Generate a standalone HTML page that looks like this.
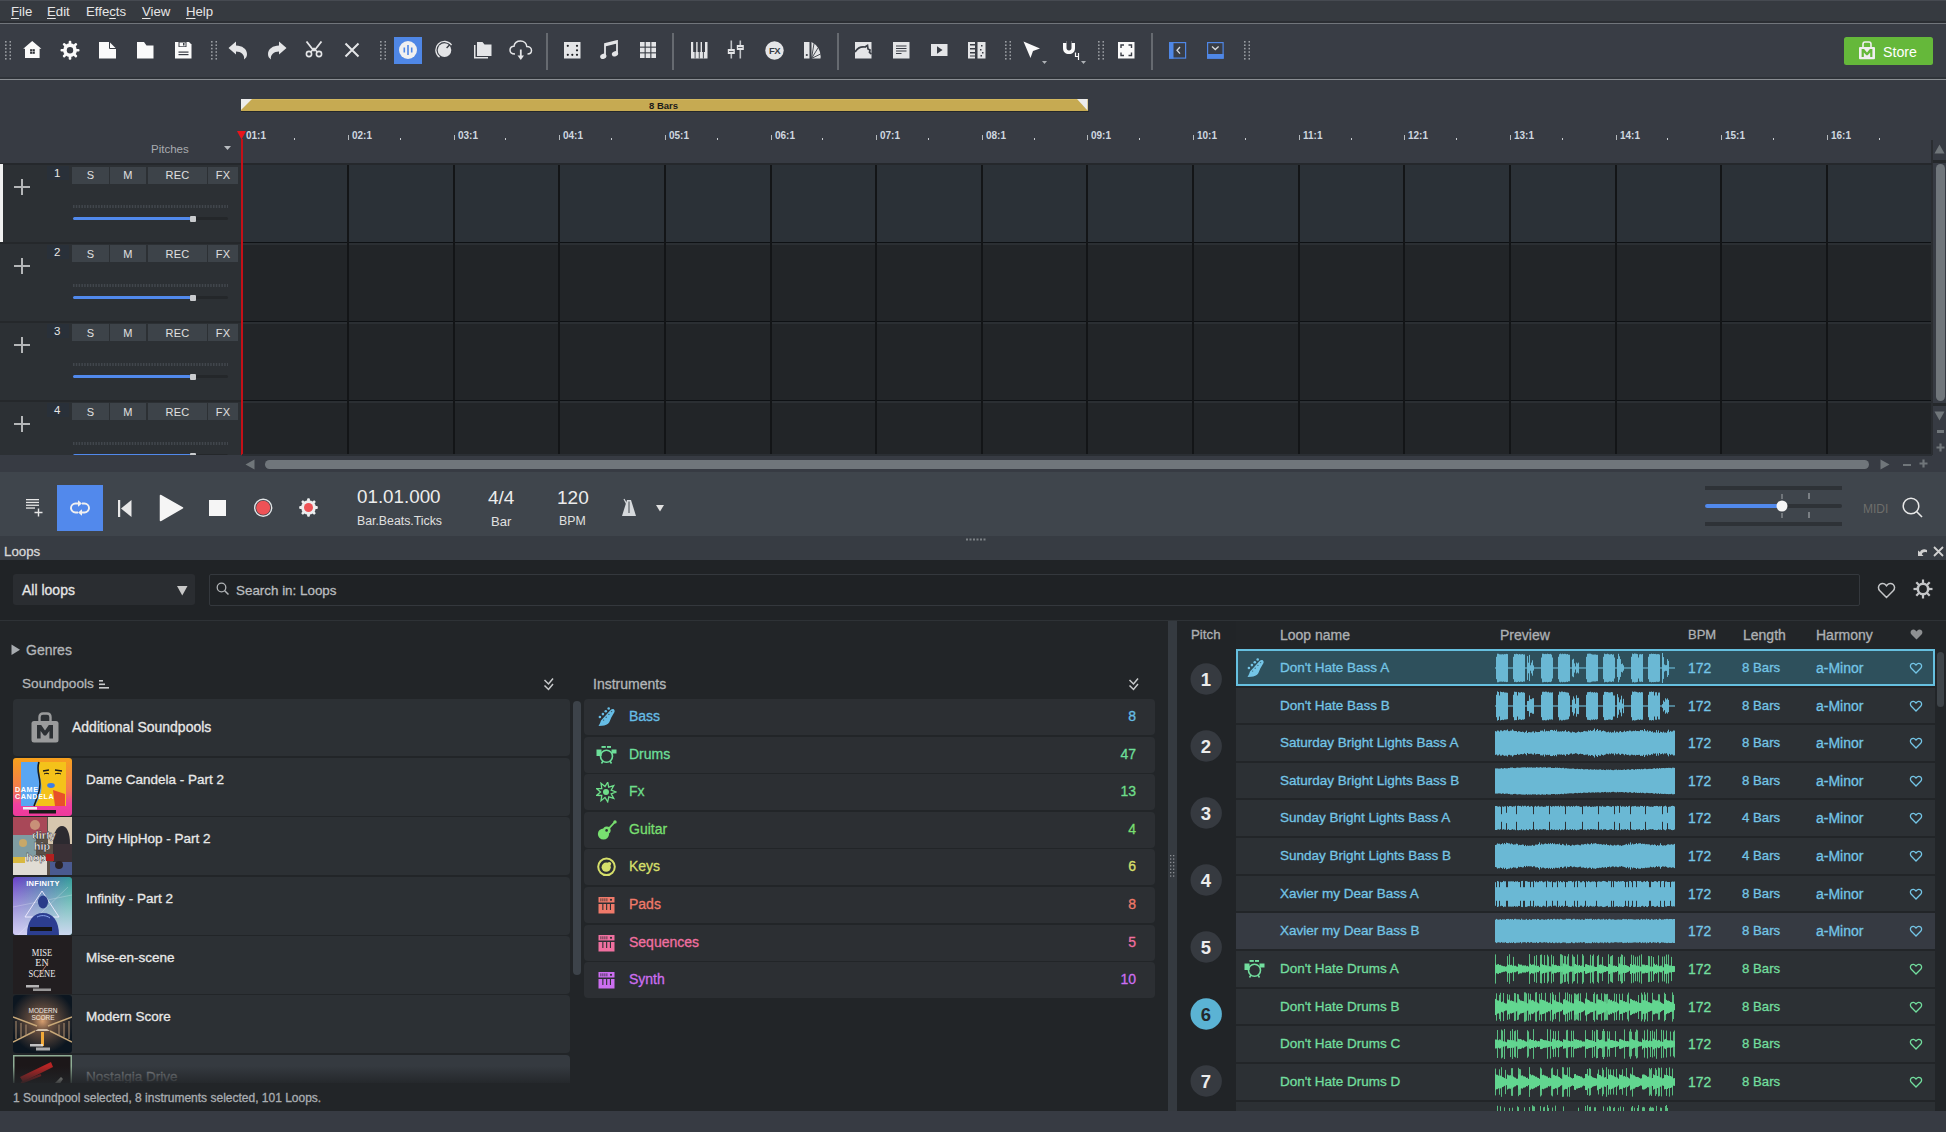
<!DOCTYPE html><html><head><meta charset="utf-8"><style>html,body{margin:0;padding:0;}body{width:1946px;height:1132px;overflow:hidden;position:relative;background:#363a40;font-family:"Liberation Sans",sans-serif;}div,svg{box-sizing:border-box;}</style></head><body>
<div style="position:absolute;left:0px;top:0px;width:1946px;height:21px;background:#363a40;"></div>
<div style="position:absolute;left:0px;top:0px;width:1946px;height:1px;background:#464a51;"></div>
<div style="position:absolute;left:0px;top:21px;width:1946px;height:2px;background:#2b2e33;"></div>
<div style="position:absolute;left:0px;top:23px;width:1946px;height:1px;background:#71757b;"></div>
<div style="position:absolute;left:11px;top:5px;font-size:13.2px;line-height:13.2px;color:#e6e6e6;font-weight:400;white-space:nowrap;"><span style="text-decoration:underline;text-underline-offset:2px">F</span>ile</div>
<div style="position:absolute;left:47px;top:5px;font-size:13.2px;line-height:13.2px;color:#e6e6e6;font-weight:400;white-space:nowrap;"><span style="text-decoration:underline;text-underline-offset:2px">E</span>dit</div>
<div style="position:absolute;left:86px;top:5px;font-size:13.2px;line-height:13.2px;color:#e6e6e6;font-weight:400;white-space:nowrap;">Effe<span style="text-decoration:underline;text-underline-offset:2px">c</span>ts</div>
<div style="position:absolute;left:142px;top:5px;font-size:13.2px;line-height:13.2px;color:#e6e6e6;font-weight:400;white-space:nowrap;"><span style="text-decoration:underline;text-underline-offset:2px">V</span>iew</div>
<div style="position:absolute;left:186px;top:5px;font-size:13.2px;line-height:13.2px;color:#e6e6e6;font-weight:400;white-space:nowrap;"><span style="text-decoration:underline;text-underline-offset:2px">H</span>elp</div>
<div style="position:absolute;left:0px;top:24px;width:1946px;height:53px;background:#393d45;"></div>
<div style="position:absolute;left:0px;top:77px;width:1946px;height:2px;background:#2f3339;"></div>
<div style="position:absolute;left:0px;top:79px;width:1946px;height:1px;background:#8a8e93;"></div>
<svg style="position:absolute;left:5px;top:41px;" width="6" height="20" viewBox="0 0 6 20"><rect x="0.0" y="0.0" width="1.6" height="1.6" fill="#9a9da2"/><rect x="4.5" y="0.0" width="1.6" height="1.6" fill="#9a9da2"/><rect x="0.0" y="3.4" width="1.6" height="1.6" fill="#9a9da2"/><rect x="4.5" y="3.4" width="1.6" height="1.6" fill="#9a9da2"/><rect x="0.0" y="6.8" width="1.6" height="1.6" fill="#9a9da2"/><rect x="4.5" y="6.8" width="1.6" height="1.6" fill="#9a9da2"/><rect x="0.0" y="10.2" width="1.6" height="1.6" fill="#9a9da2"/><rect x="4.5" y="10.2" width="1.6" height="1.6" fill="#9a9da2"/><rect x="0.0" y="13.6" width="1.6" height="1.6" fill="#9a9da2"/><rect x="4.5" y="13.6" width="1.6" height="1.6" fill="#9a9da2"/><rect x="0.0" y="17.0" width="1.6" height="1.6" fill="#9a9da2"/><rect x="4.5" y="17.0" width="1.6" height="1.6" fill="#9a9da2"/></svg>
<svg style="position:absolute;left:211px;top:41px;" width="6" height="20" viewBox="0 0 6 20"><rect x="0.0" y="0.0" width="1.6" height="1.6" fill="#9a9da2"/><rect x="4.5" y="0.0" width="1.6" height="1.6" fill="#9a9da2"/><rect x="0.0" y="3.4" width="1.6" height="1.6" fill="#9a9da2"/><rect x="4.5" y="3.4" width="1.6" height="1.6" fill="#9a9da2"/><rect x="0.0" y="6.8" width="1.6" height="1.6" fill="#9a9da2"/><rect x="4.5" y="6.8" width="1.6" height="1.6" fill="#9a9da2"/><rect x="0.0" y="10.2" width="1.6" height="1.6" fill="#9a9da2"/><rect x="4.5" y="10.2" width="1.6" height="1.6" fill="#9a9da2"/><rect x="0.0" y="13.6" width="1.6" height="1.6" fill="#9a9da2"/><rect x="4.5" y="13.6" width="1.6" height="1.6" fill="#9a9da2"/><rect x="0.0" y="17.0" width="1.6" height="1.6" fill="#9a9da2"/><rect x="4.5" y="17.0" width="1.6" height="1.6" fill="#9a9da2"/></svg>
<svg style="position:absolute;left:380px;top:41px;" width="6" height="20" viewBox="0 0 6 20"><rect x="0.0" y="0.0" width="1.6" height="1.6" fill="#9a9da2"/><rect x="4.5" y="0.0" width="1.6" height="1.6" fill="#9a9da2"/><rect x="0.0" y="3.4" width="1.6" height="1.6" fill="#9a9da2"/><rect x="4.5" y="3.4" width="1.6" height="1.6" fill="#9a9da2"/><rect x="0.0" y="6.8" width="1.6" height="1.6" fill="#9a9da2"/><rect x="4.5" y="6.8" width="1.6" height="1.6" fill="#9a9da2"/><rect x="0.0" y="10.2" width="1.6" height="1.6" fill="#9a9da2"/><rect x="4.5" y="10.2" width="1.6" height="1.6" fill="#9a9da2"/><rect x="0.0" y="13.6" width="1.6" height="1.6" fill="#9a9da2"/><rect x="4.5" y="13.6" width="1.6" height="1.6" fill="#9a9da2"/><rect x="0.0" y="17.0" width="1.6" height="1.6" fill="#9a9da2"/><rect x="4.5" y="17.0" width="1.6" height="1.6" fill="#9a9da2"/></svg>
<svg style="position:absolute;left:1005px;top:41px;" width="6" height="20" viewBox="0 0 6 20"><rect x="0.0" y="0.0" width="1.6" height="1.6" fill="#9a9da2"/><rect x="4.5" y="0.0" width="1.6" height="1.6" fill="#9a9da2"/><rect x="0.0" y="3.4" width="1.6" height="1.6" fill="#9a9da2"/><rect x="4.5" y="3.4" width="1.6" height="1.6" fill="#9a9da2"/><rect x="0.0" y="6.8" width="1.6" height="1.6" fill="#9a9da2"/><rect x="4.5" y="6.8" width="1.6" height="1.6" fill="#9a9da2"/><rect x="0.0" y="10.2" width="1.6" height="1.6" fill="#9a9da2"/><rect x="4.5" y="10.2" width="1.6" height="1.6" fill="#9a9da2"/><rect x="0.0" y="13.6" width="1.6" height="1.6" fill="#9a9da2"/><rect x="4.5" y="13.6" width="1.6" height="1.6" fill="#9a9da2"/><rect x="0.0" y="17.0" width="1.6" height="1.6" fill="#9a9da2"/><rect x="4.5" y="17.0" width="1.6" height="1.6" fill="#9a9da2"/></svg>
<svg style="position:absolute;left:1098px;top:41px;" width="6" height="20" viewBox="0 0 6 20"><rect x="0.0" y="0.0" width="1.6" height="1.6" fill="#9a9da2"/><rect x="4.5" y="0.0" width="1.6" height="1.6" fill="#9a9da2"/><rect x="0.0" y="3.4" width="1.6" height="1.6" fill="#9a9da2"/><rect x="4.5" y="3.4" width="1.6" height="1.6" fill="#9a9da2"/><rect x="0.0" y="6.8" width="1.6" height="1.6" fill="#9a9da2"/><rect x="4.5" y="6.8" width="1.6" height="1.6" fill="#9a9da2"/><rect x="0.0" y="10.2" width="1.6" height="1.6" fill="#9a9da2"/><rect x="4.5" y="10.2" width="1.6" height="1.6" fill="#9a9da2"/><rect x="0.0" y="13.6" width="1.6" height="1.6" fill="#9a9da2"/><rect x="4.5" y="13.6" width="1.6" height="1.6" fill="#9a9da2"/><rect x="0.0" y="17.0" width="1.6" height="1.6" fill="#9a9da2"/><rect x="4.5" y="17.0" width="1.6" height="1.6" fill="#9a9da2"/></svg>
<svg style="position:absolute;left:1244px;top:41px;" width="6" height="20" viewBox="0 0 6 20"><rect x="0.0" y="0.0" width="1.6" height="1.6" fill="#9a9da2"/><rect x="4.5" y="0.0" width="1.6" height="1.6" fill="#9a9da2"/><rect x="0.0" y="3.4" width="1.6" height="1.6" fill="#9a9da2"/><rect x="4.5" y="3.4" width="1.6" height="1.6" fill="#9a9da2"/><rect x="0.0" y="6.8" width="1.6" height="1.6" fill="#9a9da2"/><rect x="4.5" y="6.8" width="1.6" height="1.6" fill="#9a9da2"/><rect x="0.0" y="10.2" width="1.6" height="1.6" fill="#9a9da2"/><rect x="4.5" y="10.2" width="1.6" height="1.6" fill="#9a9da2"/><rect x="0.0" y="13.6" width="1.6" height="1.6" fill="#9a9da2"/><rect x="4.5" y="13.6" width="1.6" height="1.6" fill="#9a9da2"/><rect x="0.0" y="17.0" width="1.6" height="1.6" fill="#9a9da2"/><rect x="4.5" y="17.0" width="1.6" height="1.6" fill="#9a9da2"/></svg>
<div style="position:absolute;left:546px;top:33px;width:2px;height:37px;background:#666a70;"></div>
<div style="position:absolute;left:672px;top:33px;width:2px;height:37px;background:#666a70;"></div>
<div style="position:absolute;left:837px;top:33px;width:2px;height:37px;background:#666a70;"></div>
<div style="position:absolute;left:1151px;top:33px;width:2px;height:37px;background:#666a70;"></div>
<svg style="position:absolute;left:23px;top:40px;" width="19" height="19" viewBox="0 0 19 19"><path d="M9.2 1 L18.4 8.8 L16.6 8.8 L16.6 18.1 L2 18.1 L2 8.8 L0.2 8.8 Z" fill="#fafafa"/><rect x="7.1" y="9.2" width="4.7" height="4.6" fill="#2c2f35"/><path d="M9.45 9.2 v4.6 M7.1 11.5 h4.7" stroke="#fafafa" stroke-width="0.5"/></svg>
<svg style="position:absolute;left:60px;top:40px;" width="20" height="20" viewBox="0 0 20 20"><rect x="8.7" y="0.7" width="2.6" height="4.5" rx="1" fill="#fafafa" transform="rotate(0 10 10.2)"/><rect x="8.7" y="0.7" width="2.6" height="4.5" rx="1" fill="#fafafa" transform="rotate(45 10 10.2)"/><rect x="8.7" y="0.7" width="2.6" height="4.5" rx="1" fill="#fafafa" transform="rotate(90 10 10.2)"/><rect x="8.7" y="0.7" width="2.6" height="4.5" rx="1" fill="#fafafa" transform="rotate(135 10 10.2)"/><rect x="8.7" y="0.7" width="2.6" height="4.5" rx="1" fill="#fafafa" transform="rotate(180 10 10.2)"/><rect x="8.7" y="0.7" width="2.6" height="4.5" rx="1" fill="#fafafa" transform="rotate(225 10 10.2)"/><rect x="8.7" y="0.7" width="2.6" height="4.5" rx="1" fill="#fafafa" transform="rotate(270 10 10.2)"/><rect x="8.7" y="0.7" width="2.6" height="4.5" rx="1" fill="#fafafa" transform="rotate(315 10 10.2)"/><circle cx="10" cy="10.2" r="6.9" fill="#fafafa"/><circle cx="10" cy="10.2" r="3.2" fill="#393d45"/></svg>
<svg style="position:absolute;left:99px;top:42px;" width="17" height="17" viewBox="0 0 17 17"><path d="M0 0 H10.5 L17 6.5 V16.5 H0 Z" fill="#fafafa"/><path d="M10.5 0 V6.5 H17" fill="none" stroke="#393d45" stroke-width="1"/></svg>
<svg style="position:absolute;left:137px;top:42px;" width="17" height="17" viewBox="0 0 17 17"><path d="M0 0 H7 L9.5 3.5 H16.5 V16.5 H0 Z" fill="#fafafa"/></svg>
<svg style="position:absolute;left:175px;top:42px;" width="17" height="17" viewBox="0 0 17 17"><path d="M0 0 H14 L16.5 2.5 V16.5 H0 Z" fill="#fafafa"/><rect x="3.5" y="0" width="8" height="5" fill="#393d45"/><rect x="4.5" y="0.5" width="6" height="3.8" fill="#fafafa"/><rect x="8" y="1" width="1.5" height="2.5" fill="#393d45"/><rect x="3.5" y="9.5" width="10" height="1.2" fill="#393d45"/><rect x="3.5" y="12" width="10" height="1.2" fill="#393d45"/></svg>
<svg style="position:absolute;left:228px;top:41px;" width="20" height="19" viewBox="0 0 20 19"><path d="M0.5 7 L8 0.5 V4.5 C14 4.5 19 8 19 13 C19 15.5 18 17 16 18.5 C17 14 13 10.5 8 10.5 V13.5 Z" fill="#e4e5e7"/></svg>
<svg style="position:absolute;left:267px;top:41px;" width="20" height="19" viewBox="0 0 20 19"><path d="M19.5 7 L12 0.5 V4.5 C6 4.5 1 8 1 13 C1 15.5 2 17 4 18.5 C3 14 7 10.5 12 10.5 V13.5 Z" fill="#e4e5e7"/></svg>
<svg style="position:absolute;left:305px;top:41px;" width="18" height="17" viewBox="0 0 18 17"><path d="M1.5 0.5 L9 10 M16.5 0.5 L9 10" stroke="#e4e5e7" stroke-width="1.8" fill="none"/><circle cx="4" cy="13" r="2.6" fill="none" stroke="#e4e5e7" stroke-width="1.6"/><circle cx="14" cy="13" r="2.6" fill="none" stroke="#e4e5e7" stroke-width="1.6"/><path d="M5.8 11 L9 7.5 L12.2 11" stroke="#e4e5e7" stroke-width="1.6" fill="none"/></svg>
<svg style="position:absolute;left:344px;top:42px;" width="16" height="16" viewBox="0 0 16 16"><path d="M1.5 1.5 L14.5 14.5 M14.5 1.5 L1.5 14.5" stroke="#e4e5e7" stroke-width="2"/></svg>
<div style="position:absolute;left:394px;top:37px;width:28px;height:27px;background:#4f87e6;"></div>
<svg style="position:absolute;left:399px;top:41px;" width="18" height="18" viewBox="0 0 18 18"><circle cx="9" cy="9" r="9" fill="#f0f0f0"/><rect x="4.5" y="6.5" width="1.6" height="5" fill="#4f87e6"/><rect x="8.2" y="4" width="1.6" height="10" fill="#4f87e6"/><rect x="11.9" y="6.5" width="1.6" height="5" fill="#4f87e6"/></svg>
<svg style="position:absolute;left:435px;top:40px;" width="19" height="19" viewBox="0 0 19 19"><circle cx="9.5" cy="10.1" r="6.8" fill="#e4e5e7"/><path d="M4.57 17.14 A8.6 8.6 0 1 1 16.54 5.17" fill="none" stroke="#e4e5e7" stroke-width="1.3"/><path d="M11.6 8 L15 4.6" stroke="#393d45" stroke-width="1.4"/></svg>
<svg style="position:absolute;left:474px;top:41px;" width="19" height="18" viewBox="0 0 19 18"><path d="M0 4 V17.5 H14 V16 H1.5 V4 Z" fill="#e4e5e7"/><path d="M3 1 H8.5 L10.5 3.5 H17.5 V15 H3 Z" fill="#e4e5e7"/></svg>
<svg style="position:absolute;left:509px;top:40px;" width="24" height="21" viewBox="0 0 24 21"><path d="M6 14 C2.5 14 1 12 1 10 C1 7.5 3 6 5 6.2 C5.5 3 8 1 11.5 1 C15 1 17.5 3.5 17.8 6.5 C20.5 6.5 22.5 8.3 22.5 10.5 C22.5 12.5 21 14 18.5 14" fill="none" stroke="#e4e5e7" stroke-width="1.5"/><path d="M11.8 9.5 V18" stroke="#e4e5e7" stroke-width="1.8"/><path d="M8.5 15.5 L11.8 20 L15 15.5 Z" fill="#e4e5e7"/></svg>
<svg style="position:absolute;left:564px;top:42px;" width="17" height="17" viewBox="0 0 17 17"><rect x="0" y="0" width="16.5" height="16.5" fill="#e4e5e7"/><g fill="#1b1d20"><circle cx="3.8" cy="3.8" r="1.1"/><circle cx="13" cy="3.8" r="1.1"/><circle cx="13" cy="8.3" r="1.1"/><circle cx="3.8" cy="12.8" r="1.1"/><circle cx="8.3" cy="12.8" r="1.1"/><circle cx="13" cy="12.8" r="1.1"/></g></svg>
<svg style="position:absolute;left:600px;top:40px;" width="19" height="20" viewBox="0 0 19 20"><path d="M5 15.5 V4 L17 1 V13" stroke="#e4e5e7" stroke-width="1.8" fill="none"/><path d="M5 4 L17 1 V3.5 L5 6.5 Z" fill="#e4e5e7"/><ellipse cx="3.3" cy="16.3" rx="3.2" ry="2.5" fill="#e4e5e7" transform="rotate(-20 3.3 16.3)"/><ellipse cx="15" cy="13.8" rx="3.2" ry="2.5" fill="#e4e5e7" transform="rotate(-20 15 13.8)"/></svg>
<svg style="position:absolute;left:640px;top:42px;" width="17" height="17" viewBox="0 0 17 17"><rect x="0.0" y="0.0" width="4.6" height="4.6" fill="#e4e5e7"/><rect x="5.7" y="0.0" width="4.6" height="4.6" fill="#e4e5e7"/><rect x="11.4" y="0.0" width="4.6" height="4.6" fill="#e4e5e7"/><rect x="0.0" y="5.7" width="4.6" height="4.6" fill="#e4e5e7"/><rect x="5.7" y="5.7" width="4.6" height="4.6" fill="#e4e5e7"/><rect x="11.4" y="5.7" width="4.6" height="4.6" fill="#e4e5e7"/><rect x="0.0" y="11.4" width="4.6" height="4.6" fill="#e4e5e7"/><rect x="5.7" y="11.4" width="4.6" height="4.6" fill="#e4e5e7"/><rect x="11.4" y="11.4" width="4.6" height="4.6" fill="#e4e5e7"/></svg>
<svg style="position:absolute;left:691px;top:42px;" width="17" height="17" viewBox="0 0 17 17"><rect x="0" y="0" width="16.5" height="16.5" fill="#e4e5e7"/><g stroke="#393d45" stroke-width="0.9"><path d="M4.1 10 V16.5 M8.25 10 V16.5 M12.4 10 V16.5"/></g><g fill="#393d45"><rect x="2.2" y="0" width="3" height="10"/><rect x="6.6" y="0" width="3" height="10"/><rect x="11" y="0" width="3" height="10"/></g></svg>
<svg style="position:absolute;left:727px;top:40px;" width="19" height="20" viewBox="0 0 19 20"><rect x="3.5" y="0.5" width="1.6" height="18" fill="#bfc2c6"/><rect x="12.5" y="0.5" width="1.6" height="18" fill="#bfc2c6"/><rect x="0.8" y="9" width="7" height="5" fill="#e4e5e7"/><rect x="9.8" y="5" width="7" height="5" fill="#e4e5e7"/><path d="M2 11.5 h4.5 M11 7.5 h4.5" stroke="#393d45" stroke-width="0.8"/></svg>
<svg style="position:absolute;left:765px;top:41px;" width="19" height="19" viewBox="0 0 19 19"><circle cx="9.5" cy="9.5" r="9.2" fill="#e4e5e7"/><text x="9.6" y="13.2" font-family="Liberation Sans" font-weight="700" font-size="9.5" text-anchor="middle" fill="#393d45" letter-spacing="-0.6">FX</text></svg>
<svg style="position:absolute;left:804px;top:42px;" width="17" height="17" viewBox="0 0 17 17"><rect x="0" y="0" width="5.5" height="16.5" fill="#e4e5e7"/><circle cx="2.8" cy="13" r="1.1" fill="#393d45"/><path d="M7.5 0 A16 16 0 0 1 16.5 16.5 H7.5 Z" fill="#e4e5e7"/><path d="M7.5 16.5 L10 1.5 M7.5 16.5 L14 6 M7.5 16.5 L16.5 12" stroke="#393d45" stroke-width="0.9"/></svg>
<svg style="position:absolute;left:855px;top:42px;" width="17" height="17" viewBox="0 0 17 17"><rect x="0" y="0" width="16.5" height="16.5" fill="#e4e5e7"/><path d="M0 10 C3 5 7 4.5 10 5 L12.5 3.5 L13 7 L15 8 L14.5 10.5 L16.5 12" fill="none" stroke="#393d45" stroke-width="1.7"/></svg>
<svg style="position:absolute;left:893px;top:42px;" width="17" height="17" viewBox="0 0 17 17"><rect x="0" y="0" width="16.5" height="16.5" fill="#e4e5e7"/><g fill="#393d45"><rect x="3" y="3.5" width="10.5" height="1"/><rect x="3" y="6" width="10.5" height="1"/><rect x="3" y="8.5" width="10.5" height="1"/><rect x="3" y="11" width="5.5" height="1"/></g></svg>
<svg style="position:absolute;left:931px;top:44px;" width="17" height="13" viewBox="0 0 17 13"><rect x="0" y="0" width="16.5" height="12" fill="#e4e5e7"/><path d="M6 2.3 L11.5 6 L6 9.7 Z" fill="#393d45"/></svg>
<svg style="position:absolute;left:968px;top:42px;" width="18" height="17" viewBox="0 0 18 17"><rect x="0" y="0" width="7" height="16.5" fill="#e4e5e7"/><rect x="9.5" y="0" width="8" height="16.5" fill="#e4e5e7"/><g fill="#393d45"><rect x="2" y="2" width="5" height="1.5"/><rect x="2" y="6" width="5" height="1.5"/><rect x="2" y="10" width="5" height="1.5"/><rect x="2" y="13.5" width="5" height="1"/><rect x="13" y="3" width="1.5" height="1.5"/><rect x="12" y="7" width="1.5" height="1.5"/><rect x="14" y="10" width="1.5" height="1.5"/><rect x="12.5" y="13" width="1.5" height="1.5"/></g></svg>
<svg style="position:absolute;left:1022px;top:40px;" width="28" height="26" viewBox="0 0 28 26"><path d="M1.5 1.5 L18 8.5 L11 11 L8.5 18 Z" fill="#fafafa"/><path d="M20 21 L25 21 L22.5 24 Z" fill="#aeb2b6"/></svg>
<svg style="position:absolute;left:1061px;top:40px;" width="28" height="26" viewBox="0 0 28 26"><path d="M2 1 V8 C2 12 4.5 14 8 14 C11.5 14 14 12 14 8 V1 H10.5 V8 C10.5 9.5 9.5 10.5 8 10.5 C6.5 10.5 5.5 9.5 5.5 8 V1 Z" fill="#fafafa"/><rect x="2" y="1" width="3.5" height="2" fill="#393d45"/><rect x="10.5" y="1" width="3.5" height="2" fill="#393d45"/><path d="M14.5 12.5 V16.5 H18 M17.5 13 V20" stroke="#fafafa" stroke-width="1.2" fill="none"/><path d="M20 21 L25 21 L22.5 24 Z" fill="#aeb2b6"/></svg>
<svg style="position:absolute;left:1118px;top:42px;" width="17" height="17" viewBox="0 0 17 17"><rect x="0" y="0" width="16.5" height="16.5" fill="#fafafa"/><path d="M3 6 V3 H6 M10.5 3 H13.5 V6 M13.5 10.5 V13.5 H10.5 M6 13.5 H3 V10.5" fill="none" stroke="#393d45" stroke-width="1.4"/></svg>
<svg style="position:absolute;left:1169px;top:42px;" width="18" height="17" viewBox="0 0 18 17"><rect x="0.6" y="0.6" width="16" height="15.5" fill="none" stroke="#4f87e6" stroke-width="1.2"/><rect x="0" y="0" width="4.5" height="16.7" fill="#4f87e6"/><path d="M11 5 L8 8.3 L11 11.6" fill="none" stroke="#d9dce0" stroke-width="1.3"/></svg>
<svg style="position:absolute;left:1207px;top:42px;" width="17" height="17" viewBox="0 0 17 17"><rect x="0.6" y="0.6" width="15.5" height="15.5" fill="none" stroke="#4f87e6" stroke-width="1.2"/><rect x="0" y="12" width="16.7" height="4.7" fill="#4f87e6"/><path d="M5 4.5 L8.3 7.5 L11.6 4.5" fill="none" stroke="#d9dce0" stroke-width="1.3"/></svg>
<div style="position:absolute;left:1844px;top:37px;width:89px;height:28px;background:#65b83a;border-radius:2.5px;"></div>
<svg style="position:absolute;left:1858px;top:41px;" width="18" height="19" viewBox="0 0 18 19"><path d="M5 6.5 V3.2 C5 1.8 5.8 1 7 1 H11 C12.2 1 13 1.8 13 3.2 V6.5" fill="none" stroke="#f0eef0" stroke-width="1.6"/><rect x="1" y="5.9" width="16" height="12.4" rx="1" fill="#f0eef0"/><path d="M3.6 16 V8 H6.1 L9 11.6 L11.9 8 H14.4 V16 H12.2 V11.5 L9.7 14.3 H8.3 L5.8 11.5 V16 Z" fill="#65b83a"/></svg>
<div style="position:absolute;left:1883px;top:45px;font-size:14.2px;line-height:14.2px;color:#ffffff;font-weight:400;white-space:nowrap;">Store</div>
<div style="position:absolute;left:0px;top:80px;width:1946px;height:83px;background:#373b43;"></div>
<div style="position:absolute;left:241px;top:111px;width:848px;height:1px;background:#24272b;"></div>
<div style="position:absolute;left:241px;top:99px;width:847px;height:12px;background:#c6aa52;"></div>
<div style="position:absolute;left:241px;top:99px;width:847px;height:1px;background:#d2b75e;"></div>
<svg style="position:absolute;left:241px;top:99px;" width="12" height="12" viewBox="0 0 12 12"><path d="M0 0 H11 L0 11 Z" fill="#ececec"/></svg>
<svg style="position:absolute;left:1076px;top:99px;" width="12" height="12" viewBox="0 0 12 12"><path d="M1 0 H11.5 V11.5 Z" fill="#ececec"/></svg>
<div style="position:absolute;left:649px;top:101px;font-size:9.5px;line-height:9.5px;color:#1a1a1a;font-weight:700;white-space:nowrap;">8 Bars</div>
<div style="position:absolute;left:151px;top:144px;font-size:11.5px;line-height:11.5px;color:#a7abb0;font-weight:400;white-space:nowrap;">Pitches</div>
<svg style="position:absolute;left:224px;top:146px;" width="8" height="5" viewBox="0 0 8 5"><path d="M0 0 H7 L3.5 4 Z" fill="#b8bcc0"/></svg>
<div style="position:absolute;left:246px;top:131px;font-size:10px;line-height:10px;color:#cfd8e0;font-weight:700;white-space:nowrap;">01:1</div>
<div style="position:absolute;left:294px;top:138px;width:1px;height:2px;background:#c8ccd0;"></div>
<div style="position:absolute;left:352px;top:131px;font-size:10px;line-height:10px;color:#cfd8e0;font-weight:700;white-space:nowrap;">02:1</div>
<div style="position:absolute;left:348px;top:135px;width:1px;height:5px;background:#b4b8bc;"></div>
<div style="position:absolute;left:400px;top:138px;width:1px;height:2px;background:#c8ccd0;"></div>
<div style="position:absolute;left:458px;top:131px;font-size:10px;line-height:10px;color:#cfd8e0;font-weight:700;white-space:nowrap;">03:1</div>
<div style="position:absolute;left:454px;top:135px;width:1px;height:5px;background:#b4b8bc;"></div>
<div style="position:absolute;left:505px;top:138px;width:1px;height:2px;background:#c8ccd0;"></div>
<div style="position:absolute;left:563px;top:131px;font-size:10px;line-height:10px;color:#cfd8e0;font-weight:700;white-space:nowrap;">04:1</div>
<div style="position:absolute;left:559px;top:135px;width:1px;height:5px;background:#b4b8bc;"></div>
<div style="position:absolute;left:611px;top:138px;width:1px;height:2px;background:#c8ccd0;"></div>
<div style="position:absolute;left:669px;top:131px;font-size:10px;line-height:10px;color:#cfd8e0;font-weight:700;white-space:nowrap;">05:1</div>
<div style="position:absolute;left:665px;top:135px;width:1px;height:5px;background:#b4b8bc;"></div>
<div style="position:absolute;left:717px;top:138px;width:1px;height:2px;background:#c8ccd0;"></div>
<div style="position:absolute;left:775px;top:131px;font-size:10px;line-height:10px;color:#cfd8e0;font-weight:700;white-space:nowrap;">06:1</div>
<div style="position:absolute;left:771px;top:135px;width:1px;height:5px;background:#b4b8bc;"></div>
<div style="position:absolute;left:822px;top:138px;width:1px;height:2px;background:#c8ccd0;"></div>
<div style="position:absolute;left:880px;top:131px;font-size:10px;line-height:10px;color:#cfd8e0;font-weight:700;white-space:nowrap;">07:1</div>
<div style="position:absolute;left:876px;top:135px;width:1px;height:5px;background:#b4b8bc;"></div>
<div style="position:absolute;left:928px;top:138px;width:1px;height:2px;background:#c8ccd0;"></div>
<div style="position:absolute;left:986px;top:131px;font-size:10px;line-height:10px;color:#cfd8e0;font-weight:700;white-space:nowrap;">08:1</div>
<div style="position:absolute;left:982px;top:135px;width:1px;height:5px;background:#b4b8bc;"></div>
<div style="position:absolute;left:1034px;top:138px;width:1px;height:2px;background:#c8ccd0;"></div>
<div style="position:absolute;left:1091px;top:131px;font-size:10px;line-height:10px;color:#cfd8e0;font-weight:700;white-space:nowrap;">09:1</div>
<div style="position:absolute;left:1087px;top:135px;width:1px;height:5px;background:#b4b8bc;"></div>
<div style="position:absolute;left:1139px;top:138px;width:1px;height:2px;background:#c8ccd0;"></div>
<div style="position:absolute;left:1197px;top:131px;font-size:10px;line-height:10px;color:#cfd8e0;font-weight:700;white-space:nowrap;">10:1</div>
<div style="position:absolute;left:1193px;top:135px;width:1px;height:5px;background:#b4b8bc;"></div>
<div style="position:absolute;left:1245px;top:138px;width:1px;height:2px;background:#c8ccd0;"></div>
<div style="position:absolute;left:1303px;top:131px;font-size:10px;line-height:10px;color:#cfd8e0;font-weight:700;white-space:nowrap;">11:1</div>
<div style="position:absolute;left:1299px;top:135px;width:1px;height:5px;background:#b4b8bc;"></div>
<div style="position:absolute;left:1351px;top:138px;width:1px;height:2px;background:#c8ccd0;"></div>
<div style="position:absolute;left:1408px;top:131px;font-size:10px;line-height:10px;color:#cfd8e0;font-weight:700;white-space:nowrap;">12:1</div>
<div style="position:absolute;left:1404px;top:135px;width:1px;height:5px;background:#b4b8bc;"></div>
<div style="position:absolute;left:1456px;top:138px;width:1px;height:2px;background:#c8ccd0;"></div>
<div style="position:absolute;left:1514px;top:131px;font-size:10px;line-height:10px;color:#cfd8e0;font-weight:700;white-space:nowrap;">13:1</div>
<div style="position:absolute;left:1510px;top:135px;width:1px;height:5px;background:#b4b8bc;"></div>
<div style="position:absolute;left:1562px;top:138px;width:1px;height:2px;background:#c8ccd0;"></div>
<div style="position:absolute;left:1620px;top:131px;font-size:10px;line-height:10px;color:#cfd8e0;font-weight:700;white-space:nowrap;">14:1</div>
<div style="position:absolute;left:1616px;top:135px;width:1px;height:5px;background:#b4b8bc;"></div>
<div style="position:absolute;left:1667px;top:138px;width:1px;height:2px;background:#c8ccd0;"></div>
<div style="position:absolute;left:1725px;top:131px;font-size:10px;line-height:10px;color:#cfd8e0;font-weight:700;white-space:nowrap;">15:1</div>
<div style="position:absolute;left:1721px;top:135px;width:1px;height:5px;background:#b4b8bc;"></div>
<div style="position:absolute;left:1773px;top:138px;width:1px;height:2px;background:#c8ccd0;"></div>
<div style="position:absolute;left:1831px;top:131px;font-size:10px;line-height:10px;color:#cfd8e0;font-weight:700;white-space:nowrap;">16:1</div>
<div style="position:absolute;left:1827px;top:135px;width:1px;height:5px;background:#b4b8bc;"></div>
<div style="position:absolute;left:1879px;top:138px;width:1px;height:2px;background:#c8ccd0;"></div>
<svg style="position:absolute;left:237px;top:131px;" width="10" height="9" viewBox="0 0 10 9"><path d="M0 0 H9 L4.5 8.5 Z" fill="#e8141c"/></svg>
<div style="position:absolute;left:242px;top:164px;width:1690px;height:291px;background:#222528;"></div>
<div style="position:absolute;left:242px;top:164px;width:1690px;height:78px;background:#2b3137;"></div>
<div style="position:absolute;left:0px;top:164px;width:241px;height:78px;background:#2c3034;"></div>
<div style="position:absolute;left:0px;top:243px;width:241px;height:78px;background:#2c3034;"></div>
<div style="position:absolute;left:0px;top:322px;width:241px;height:78px;background:#2c3034;"></div>
<div style="position:absolute;left:0px;top:401px;width:241px;height:54px;background:#2c3034;"></div>
<div style="position:absolute;left:0px;top:242px;width:241px;height:2px;background:#25282b;"></div>
<div style="position:absolute;left:242px;top:242px;width:1690px;height:1px;background:#0e1114;"></div>
<div style="position:absolute;left:242px;top:243px;width:1690px;height:2px;background:#2b2f33;"></div>
<div style="position:absolute;left:0px;top:321px;width:241px;height:2px;background:#25282b;"></div>
<div style="position:absolute;left:242px;top:321px;width:1690px;height:1px;background:#0e1114;"></div>
<div style="position:absolute;left:242px;top:322px;width:1690px;height:2px;background:#2b2f33;"></div>
<div style="position:absolute;left:0px;top:400px;width:241px;height:2px;background:#25282b;"></div>
<div style="position:absolute;left:242px;top:400px;width:1690px;height:1px;background:#0e1114;"></div>
<div style="position:absolute;left:242px;top:401px;width:1690px;height:2px;background:#2b2f33;"></div>
<div style="position:absolute;left:347px;top:164px;width:2px;height:291px;background:#131517;"></div>
<div style="position:absolute;left:453px;top:164px;width:2px;height:291px;background:#131517;"></div>
<div style="position:absolute;left:558px;top:164px;width:2px;height:291px;background:#131517;"></div>
<div style="position:absolute;left:664px;top:164px;width:2px;height:291px;background:#131517;"></div>
<div style="position:absolute;left:770px;top:164px;width:2px;height:291px;background:#131517;"></div>
<div style="position:absolute;left:875px;top:164px;width:2px;height:291px;background:#131517;"></div>
<div style="position:absolute;left:981px;top:164px;width:2px;height:291px;background:#131517;"></div>
<div style="position:absolute;left:1086px;top:164px;width:2px;height:291px;background:#131517;"></div>
<div style="position:absolute;left:1192px;top:164px;width:2px;height:291px;background:#131517;"></div>
<div style="position:absolute;left:1298px;top:164px;width:2px;height:291px;background:#131517;"></div>
<div style="position:absolute;left:1403px;top:164px;width:2px;height:291px;background:#131517;"></div>
<div style="position:absolute;left:1509px;top:164px;width:2px;height:291px;background:#131517;"></div>
<div style="position:absolute;left:1615px;top:164px;width:2px;height:291px;background:#131517;"></div>
<div style="position:absolute;left:1720px;top:164px;width:2px;height:291px;background:#131517;"></div>
<div style="position:absolute;left:1826px;top:164px;width:2px;height:291px;background:#131517;"></div>
<div style="position:absolute;left:1931px;top:140px;width:2px;height:315px;background:#2a2d31;"></div>
<div style="position:absolute;left:0px;top:163px;width:1932px;height:2px;background:#25282c;"></div>
<div style="position:absolute;left:0px;top:164px;width:3px;height:78px;background:#f0f0f0;"></div>
<svg style="position:absolute;left:13px;top:178px;" width="18" height="18" viewBox="0 0 18 18"><path d="M9 1 V17 M1 9 H17" stroke="#b4b6b8" stroke-width="2"/></svg>
<div style="position:absolute;left:47px;top:166px;width:22px;height:14px;background:#293039;"></div>
<div style="position:absolute;left:54px;top:168px;font-size:11.5px;line-height:11.5px;color:#e8e8e8;font-weight:400;white-space:nowrap;">1</div>
<div style="position:absolute;left:72px;top:166.5px;width:37px;height:17px;background:#3d4349;"></div>
<div style="position:absolute;left:72px;top:169px;width:37px;text-align:center;font-size:11px;line-height:13px;color:#e0e0e0;letter-spacing:0.2px">S</div>
<div style="position:absolute;left:110px;top:166.5px;width:36px;height:17px;background:#3d4349;"></div>
<div style="position:absolute;left:110px;top:169px;width:36px;text-align:center;font-size:11px;line-height:13px;color:#e0e0e0;letter-spacing:0.2px">M</div>
<div style="position:absolute;left:148px;top:166.5px;width:59px;height:17px;background:#3d4349;"></div>
<div style="position:absolute;left:148px;top:169px;width:59px;text-align:center;font-size:11px;line-height:13px;color:#e0e0e0;letter-spacing:0.2px">REC</div>
<div style="position:absolute;left:208px;top:166.5px;width:30px;height:17px;background:#3d4349;"></div>
<div style="position:absolute;left:208px;top:169px;width:30px;text-align:center;font-size:11px;line-height:13px;color:#e0e0e0;letter-spacing:0.2px">FX</div>
<svg style="position:absolute;left:73px;top:205px;" width="155" height="3" viewBox="0 0 155 3"><line x1="0" y1="1.5" x2="155" y2="1.5" stroke="#41464c" stroke-width="3" stroke-dasharray="1.5 1.3"/></svg>
<div style="position:absolute;left:73px;top:217px;width:155px;height:3px;background:#24272a;border-radius:1.5px;"></div>
<div style="position:absolute;left:73px;top:217px;width:118px;height:3px;background:#5189ec;border-radius:1.5px;"></div>
<div style="position:absolute;left:190px;top:215.5px;width:6px;height:6px;background:#c9cbce;border-radius:1px;"></div>
<svg style="position:absolute;left:13px;top:257px;" width="18" height="18" viewBox="0 0 18 18"><path d="M9 1 V17 M1 9 H17" stroke="#b4b6b8" stroke-width="2"/></svg>
<div style="position:absolute;left:47px;top:245px;width:22px;height:14px;background:#293039;"></div>
<div style="position:absolute;left:54px;top:247px;font-size:11.5px;line-height:11.5px;color:#e8e8e8;font-weight:400;white-space:nowrap;">2</div>
<div style="position:absolute;left:72px;top:245px;width:37px;height:17px;background:#3d4349;"></div>
<div style="position:absolute;left:72px;top:248px;width:37px;text-align:center;font-size:11px;line-height:13px;color:#e0e0e0;letter-spacing:0.2px">S</div>
<div style="position:absolute;left:110px;top:245px;width:36px;height:17px;background:#3d4349;"></div>
<div style="position:absolute;left:110px;top:248px;width:36px;text-align:center;font-size:11px;line-height:13px;color:#e0e0e0;letter-spacing:0.2px">M</div>
<div style="position:absolute;left:148px;top:245px;width:59px;height:17px;background:#3d4349;"></div>
<div style="position:absolute;left:148px;top:248px;width:59px;text-align:center;font-size:11px;line-height:13px;color:#e0e0e0;letter-spacing:0.2px">REC</div>
<div style="position:absolute;left:208px;top:245px;width:30px;height:17px;background:#3d4349;"></div>
<div style="position:absolute;left:208px;top:248px;width:30px;text-align:center;font-size:11px;line-height:13px;color:#e0e0e0;letter-spacing:0.2px">FX</div>
<svg style="position:absolute;left:73px;top:284px;" width="155" height="3" viewBox="0 0 155 3"><line x1="0" y1="1.5" x2="155" y2="1.5" stroke="#41464c" stroke-width="3" stroke-dasharray="1.5 1.3"/></svg>
<div style="position:absolute;left:73px;top:296px;width:155px;height:3px;background:#24272a;border-radius:1.5px;"></div>
<div style="position:absolute;left:73px;top:296px;width:118px;height:3px;background:#5189ec;border-radius:1.5px;"></div>
<div style="position:absolute;left:190px;top:294.5px;width:6px;height:6px;background:#c9cbce;border-radius:1px;"></div>
<svg style="position:absolute;left:13px;top:336px;" width="18" height="18" viewBox="0 0 18 18"><path d="M9 1 V17 M1 9 H17" stroke="#b4b6b8" stroke-width="2"/></svg>
<div style="position:absolute;left:47px;top:324px;width:22px;height:14px;background:#293039;"></div>
<div style="position:absolute;left:54px;top:326px;font-size:11.5px;line-height:11.5px;color:#e8e8e8;font-weight:400;white-space:nowrap;">3</div>
<div style="position:absolute;left:72px;top:324px;width:37px;height:17px;background:#3d4349;"></div>
<div style="position:absolute;left:72px;top:327px;width:37px;text-align:center;font-size:11px;line-height:13px;color:#e0e0e0;letter-spacing:0.2px">S</div>
<div style="position:absolute;left:110px;top:324px;width:36px;height:17px;background:#3d4349;"></div>
<div style="position:absolute;left:110px;top:327px;width:36px;text-align:center;font-size:11px;line-height:13px;color:#e0e0e0;letter-spacing:0.2px">M</div>
<div style="position:absolute;left:148px;top:324px;width:59px;height:17px;background:#3d4349;"></div>
<div style="position:absolute;left:148px;top:327px;width:59px;text-align:center;font-size:11px;line-height:13px;color:#e0e0e0;letter-spacing:0.2px">REC</div>
<div style="position:absolute;left:208px;top:324px;width:30px;height:17px;background:#3d4349;"></div>
<div style="position:absolute;left:208px;top:327px;width:30px;text-align:center;font-size:11px;line-height:13px;color:#e0e0e0;letter-spacing:0.2px">FX</div>
<svg style="position:absolute;left:73px;top:363px;" width="155" height="3" viewBox="0 0 155 3"><line x1="0" y1="1.5" x2="155" y2="1.5" stroke="#41464c" stroke-width="3" stroke-dasharray="1.5 1.3"/></svg>
<div style="position:absolute;left:73px;top:375px;width:155px;height:3px;background:#24272a;border-radius:1.5px;"></div>
<div style="position:absolute;left:73px;top:375px;width:118px;height:3px;background:#5189ec;border-radius:1.5px;"></div>
<div style="position:absolute;left:190px;top:373.5px;width:6px;height:6px;background:#c9cbce;border-radius:1px;"></div>
<svg style="position:absolute;left:13px;top:415px;" width="18" height="18" viewBox="0 0 18 18"><path d="M9 1 V17 M1 9 H17" stroke="#b4b6b8" stroke-width="2"/></svg>
<div style="position:absolute;left:47px;top:403px;width:22px;height:14px;background:#293039;"></div>
<div style="position:absolute;left:54px;top:405px;font-size:11.5px;line-height:11.5px;color:#e8e8e8;font-weight:400;white-space:nowrap;">4</div>
<div style="position:absolute;left:72px;top:403px;width:37px;height:17px;background:#3d4349;"></div>
<div style="position:absolute;left:72px;top:406px;width:37px;text-align:center;font-size:11px;line-height:13px;color:#e0e0e0;letter-spacing:0.2px">S</div>
<div style="position:absolute;left:110px;top:403px;width:36px;height:17px;background:#3d4349;"></div>
<div style="position:absolute;left:110px;top:406px;width:36px;text-align:center;font-size:11px;line-height:13px;color:#e0e0e0;letter-spacing:0.2px">M</div>
<div style="position:absolute;left:148px;top:403px;width:59px;height:17px;background:#3d4349;"></div>
<div style="position:absolute;left:148px;top:406px;width:59px;text-align:center;font-size:11px;line-height:13px;color:#e0e0e0;letter-spacing:0.2px">REC</div>
<div style="position:absolute;left:208px;top:403px;width:30px;height:17px;background:#3d4349;"></div>
<div style="position:absolute;left:208px;top:406px;width:30px;text-align:center;font-size:11px;line-height:13px;color:#e0e0e0;letter-spacing:0.2px">FX</div>
<svg style="position:absolute;left:73px;top:442px;" width="155" height="3" viewBox="0 0 155 3"><line x1="0" y1="1.5" x2="155" y2="1.5" stroke="#41464c" stroke-width="3" stroke-dasharray="1.5 1.3"/></svg>
<div style="position:absolute;left:73px;top:454px;width:155px;height:3px;background:#24272a;border-radius:1.5px;"></div>
<div style="position:absolute;left:73px;top:454px;width:118px;height:3px;background:#5189ec;border-radius:1.5px;"></div>
<div style="position:absolute;left:190px;top:452.5px;width:6px;height:6px;background:#c9cbce;border-radius:1px;"></div>
<div style="position:absolute;left:241px;top:139px;width:2px;height:316px;background:#c41017;"></div>
<div style="position:absolute;left:1933px;top:140px;width:13px;height:315px;background:#373b43;"></div>
<svg style="position:absolute;left:1934px;top:144px;" width="11" height="10" viewBox="0 0 11 10"><path d="M5.5 0.5 L10.5 9.5 H0.5 Z" fill="#70767a"/></svg>
<div style="position:absolute;left:1933px;top:160px;width:13px;height:3px;background:#25282b;"></div>
<div style="position:absolute;left:1936px;top:164px;width:9px;height:237px;background:#70767b;border-radius:4.5px;"></div>
<div style="position:absolute;left:1933px;top:403px;width:13px;height:3px;background:#25282b;"></div>
<svg style="position:absolute;left:1934px;top:411px;" width="11" height="10" viewBox="0 0 11 10"><path d="M0.5 0.5 H10.5 L5.5 9.5 Z" fill="#70767a"/></svg>
<div style="position:absolute;left:1937px;top:430px;width:7px;height:2.5px;background:#70767a;"></div>
<svg style="position:absolute;left:1936px;top:443px;" width="9" height="9" viewBox="0 0 9 9"><path d="M4.5 0.5 V8.5 M0.5 4.5 H8.5" stroke="#70767a" stroke-width="2.2"/></svg>
<div style="position:absolute;left:0px;top:455px;width:1946px;height:17px;background:#373b43;"></div>
<div style="position:absolute;left:242px;top:454px;width:1690px;height:2px;background:#2a2e33;"></div>
<svg style="position:absolute;left:245px;top:459px;" width="10" height="11" viewBox="0 0 10 11"><path d="M9.5 0.5 V10.5 L0.5 5.5 Z" fill="#70767a"/></svg>
<div style="position:absolute;left:265px;top:460px;width:1604px;height:9px;background:#70767b;border-radius:4.5px;"></div>
<svg style="position:absolute;left:1880px;top:459px;" width="10" height="11" viewBox="0 0 10 11"><path d="M0.5 0.5 V10.5 L9.5 5.5 Z" fill="#70767a"/></svg>
<div style="position:absolute;left:1903px;top:463.5px;width:8px;height:2.5px;background:#70767a;"></div>
<svg style="position:absolute;left:1919px;top:459px;" width="9" height="9" viewBox="0 0 9 9"><path d="M4.5 0.5 V8.5 M0.5 4.5 H8.5" stroke="#70767a" stroke-width="2.2"/></svg>
<div style="position:absolute;left:0px;top:472px;width:1946px;height:64px;background:#3f454c;"></div>
<svg style="position:absolute;left:26px;top:499px;" width="18" height="18" viewBox="0 0 18 18"><g fill="#e6e6e6"><rect x="0" y="0" width="13" height="1.3"/><rect x="0" y="2.8" width="13" height="1.3"/><rect x="0" y="5.6" width="13" height="1.3"/><rect x="0" y="8.4" width="9" height="1.3"/></g><path d="M12.5 9.5 V17.5 M8.5 13.5 H16.5" stroke="#e6e6e6" stroke-width="1.4"/></svg>
<div style="position:absolute;left:57px;top:485px;width:46px;height:46px;background:#5289ec;"></div>
<svg style="position:absolute;left:68px;top:500px;" width="24" height="16" viewBox="0 0 24 16"><path d="M11 3.5 H7.5 A4.5 4.5 0 0 0 7.5 12.5 H10" fill="none" stroke="#f0f0f0" stroke-width="1.9"/><path d="M10 0.2 L14 3.5 L10 6.8 Z" fill="#f0f0f0"/><path d="M13 12.5 H16.5 A4.5 4.5 0 0 0 16.5 3.5 H14" fill="none" stroke="#f0f0f0" stroke-width="1.9"/><path d="M14 9.2 L10 12.5 L14 15.8 Z" fill="#f0f0f0"/></svg>
<svg style="position:absolute;left:117px;top:499px;" width="16" height="19" viewBox="0 0 16 19"><rect x="1" y="1" width="2.2" height="17" fill="#e8e8e8"/><path d="M14.5 1 V18 L4 9.5 Z" fill="#e8e8e8"/></svg>
<svg style="position:absolute;left:159px;top:494px;" width="25" height="28" viewBox="0 0 25 28"><path d="M1.5 1.5 L23.5 13.8 L1.5 26.5 Z" fill="#f5f5f5" stroke="#f5f5f5" stroke-width="1.5" stroke-linejoin="round"/></svg>
<div style="position:absolute;left:209px;top:500px;width:17px;height:16px;background:#f5f5f5;"></div>
<svg style="position:absolute;left:253px;top:498px;" width="21" height="21" viewBox="0 0 21 21"><circle cx="10.2" cy="9.7" r="8.5" fill="none" stroke="#e2e5e7" stroke-width="1.4"/><circle cx="10.2" cy="9.7" r="7" fill="#ee5256"/></svg>
<svg style="position:absolute;left:298px;top:497px;" width="21" height="21" viewBox="0 0 21 21"><rect x="9.1" y="1.2" width="2.8" height="3.5" rx="1" fill="#eceeef" transform="rotate(0 10.5 10.5)"/><rect x="9.1" y="1.2" width="2.8" height="3.5" rx="1" fill="#eceeef" transform="rotate(45 10.5 10.5)"/><rect x="9.1" y="1.2" width="2.8" height="3.5" rx="1" fill="#eceeef" transform="rotate(90 10.5 10.5)"/><rect x="9.1" y="1.2" width="2.8" height="3.5" rx="1" fill="#eceeef" transform="rotate(135 10.5 10.5)"/><rect x="9.1" y="1.2" width="2.8" height="3.5" rx="1" fill="#eceeef" transform="rotate(180 10.5 10.5)"/><rect x="9.1" y="1.2" width="2.8" height="3.5" rx="1" fill="#eceeef" transform="rotate(225 10.5 10.5)"/><rect x="9.1" y="1.2" width="2.8" height="3.5" rx="1" fill="#eceeef" transform="rotate(270 10.5 10.5)"/><rect x="9.1" y="1.2" width="2.8" height="3.5" rx="1" fill="#eceeef" transform="rotate(315 10.5 10.5)"/><circle cx="10.5" cy="10.5" r="7.3" fill="#eceeef"/><circle cx="10.5" cy="10.5" r="4.5" fill="#ee5256"/></svg>
<div style="position:absolute;left:357px;top:488px;font-size:18.8px;line-height:18.8px;color:#ececec;font-weight:400;white-space:nowrap;">01.01.000</div>
<div style="position:absolute;left:357px;top:515px;font-size:12.3px;line-height:12.3px;color:#e0e0e0;font-weight:400;white-space:nowrap;">Bar.Beats.Ticks</div>
<div style="position:absolute;left:488px;top:488px;font-size:19px;line-height:19px;color:#ececec;font-weight:400;white-space:nowrap;">4/4</div>
<div style="position:absolute;left:491px;top:515px;font-size:13px;line-height:13px;color:#e0e0e0;font-weight:400;white-space:nowrap;">Bar</div>
<div style="position:absolute;left:557px;top:488px;font-size:19px;line-height:19px;color:#ececec;font-weight:400;white-space:nowrap;">120</div>
<div style="position:absolute;left:559px;top:515px;font-size:12.3px;line-height:12.3px;color:#e0e0e0;font-weight:400;white-space:nowrap;">BPM</div>
<svg style="position:absolute;left:621px;top:498px;" width="17" height="19" viewBox="0 0 17 19"><path d="M6 2 H10 L15 18 H1 Z" fill="#d6d9dc"/><path d="M3 1 L9.5 13" stroke="#d6d9dc" stroke-width="1.2"/><path d="M8 3.5 V15" stroke="#3e444b" stroke-width="1"/></svg>
<svg style="position:absolute;left:656px;top:505px;" width="9" height="7" viewBox="0 0 9 7"><path d="M0 0 H8 L4 6.5 Z" fill="#e0e0e0"/></svg>
<div style="position:absolute;left:1705px;top:486px;width:137px;height:4px;background:#2e3237;"></div>
<div style="position:absolute;left:1705px;top:522px;width:137px;height:4px;background:#2e3237;"></div>
<div style="position:absolute;left:1705px;top:504px;width:137px;height:4px;background:#2e3237;border-radius:2px;"></div>
<div style="position:absolute;left:1705px;top:504px;width:77px;height:4px;background:#5189ec;border-radius:2px;"></div>
<div style="position:absolute;left:1781px;top:494px;width:2px;height:5px;background:#70757a;"></div>
<div style="position:absolute;left:1781px;top:513px;width:2px;height:5px;background:#70757a;"></div>
<div style="position:absolute;left:1808px;top:493px;width:2px;height:6px;background:#7a7f84;"></div>
<div style="position:absolute;left:1808px;top:512px;width:2px;height:6px;background:#7a7f84;"></div>
<svg style="position:absolute;left:1776px;top:500px;" width="12" height="12" viewBox="0 0 12 12"><circle cx="6" cy="6" r="5.5" fill="#f5f5f5"/></svg>
<div style="position:absolute;left:1863px;top:503px;font-size:12px;line-height:12px;color:#6e6e6b;font-weight:400;white-space:nowrap;">MIDI</div>
<svg style="position:absolute;left:1902px;top:497px;" width="22" height="22" viewBox="0 0 22 22"><circle cx="9" cy="9" r="7.8" fill="none" stroke="#e8e8e8" stroke-width="1.5"/><path d="M14.5 14.5 L20 20" stroke="#e8e8e8" stroke-width="1.6"/></svg>
<div style="position:absolute;left:0px;top:536px;width:1946px;height:24px;background:#373c43;"></div>
<div style="position:absolute;left:4px;top:545px;font-size:13.3px;line-height:13.3px;color:#d8d8d8;font-weight:400;white-space:nowrap;-webkit-text-stroke:0.3px #d8d8d8;">Loops</div>
<svg style="position:absolute;left:966px;top:538px;" width="22" height="3" viewBox="0 0 22 3"><rect x="0.0" y="0.5" width="2" height="2" fill="#7d8186"/><rect x="3.5" y="0.5" width="2" height="2" fill="#7d8186"/><rect x="7.0" y="0.5" width="2" height="2" fill="#7d8186"/><rect x="10.5" y="0.5" width="2" height="2" fill="#7d8186"/><rect x="14.0" y="0.5" width="2" height="2" fill="#7d8186"/><rect x="17.5" y="0.5" width="2" height="2" fill="#7d8186"/></svg>
<svg style="position:absolute;left:1917px;top:547px;" width="11" height="10" viewBox="0 0 11 10"><path d="M10 3 C7 1.5 4 2.5 3 5 L1 3.5 V9 H6.5 L4.8 7.3 C5.5 5.5 7.5 4.5 10 5.5 Z" fill="#d0d0d0"/></svg>
<svg style="position:absolute;left:1933px;top:546px;" width="11" height="11" viewBox="0 0 11 11"><path d="M1 1 L10 10 M10 1 L1 10" stroke="#d0d0d0" stroke-width="1.8"/></svg>
<div style="position:absolute;left:0px;top:560px;width:1946px;height:60px;background:#202326;"></div>
<div style="position:absolute;left:13px;top:574px;width:182px;height:31px;background:#2a2d31;border-radius:3px;"></div>
<div style="position:absolute;left:22px;top:583px;font-size:14px;line-height:14px;color:#e6e6e6;font-weight:400;white-space:nowrap;-webkit-text-stroke:0.3px #e6e6e6;">All loops</div>
<svg style="position:absolute;left:177px;top:586px;" width="11" height="10" viewBox="0 0 11 10"><path d="M0 0 H10.5 L5.25 9.5 Z" fill="#c8c8c8"/></svg>
<div style="position:absolute;left:209px;top:574px;width:1651px;height:32px;background:#1f2225;border:1px solid #34383d;border-radius:2px;"></div>
<svg style="position:absolute;left:216px;top:582px;" width="14" height="14" viewBox="0 0 14 14"><circle cx="5.5" cy="5.5" r="4.3" fill="none" stroke="#b0b3b6" stroke-width="1.3"/><path d="M8.7 8.7 L12.5 12.5" stroke="#b0b3b6" stroke-width="1.5"/></svg>
<div style="position:absolute;left:236px;top:584px;font-size:13.4px;line-height:13.4px;color:#b9bcbf;font-weight:400;white-space:nowrap;-webkit-text-stroke:0.3px #b9bcbf;">Search in: Loops</div>
<svg style="position:absolute;left:1877px;top:582px;" width="19" height="17" viewBox="0 0 19 17"><path d="M9.5 15.5 L2.8 8.8 C1 7 1 4.2 2.8 2.5 C4.6 0.9 7.2 1.1 8.6 2.8 L9.5 3.9 L10.4 2.8 C11.8 1.1 14.4 0.9 16.2 2.5 C18 4.2 18 7 16.2 8.8 Z" fill="none" stroke="#c4c6c8" stroke-width="1.5"/></svg>
<svg style="position:absolute;left:1913px;top:579px;" width="20" height="20" viewBox="0 0 20 20"><rect x="8.9" y="0.5" width="2.2" height="4.5" fill="#c4c6c8" transform="rotate(0 10 10)"/><rect x="8.9" y="0.5" width="2.2" height="4.5" fill="#c4c6c8" transform="rotate(45 10 10)"/><rect x="8.9" y="0.5" width="2.2" height="4.5" fill="#c4c6c8" transform="rotate(90 10 10)"/><rect x="8.9" y="0.5" width="2.2" height="4.5" fill="#c4c6c8" transform="rotate(135 10 10)"/><rect x="8.9" y="0.5" width="2.2" height="4.5" fill="#c4c6c8" transform="rotate(180 10 10)"/><rect x="8.9" y="0.5" width="2.2" height="4.5" fill="#c4c6c8" transform="rotate(225 10 10)"/><rect x="8.9" y="0.5" width="2.2" height="4.5" fill="#c4c6c8" transform="rotate(270 10 10)"/><rect x="8.9" y="0.5" width="2.2" height="4.5" fill="#c4c6c8" transform="rotate(315 10 10)"/><circle cx="10" cy="10" r="5.2" fill="none" stroke="#c4c6c8" stroke-width="2.6"/></svg>
<div style="position:absolute;left:0px;top:620px;width:1946px;height:1px;background:#2e3236;"></div>
<div style="position:absolute;left:0px;top:621px;width:1168px;height:490px;background:#222528;"></div>
<svg style="position:absolute;left:11px;top:644px;" width="10" height="12" viewBox="0 0 10 12"><path d="M0.5 0.5 L9 5.8 L0.5 11 Z" fill="#a8acb0"/></svg>
<div style="position:absolute;left:26px;top:643px;font-size:14px;line-height:14px;color:#b3b6b9;font-weight:400;white-space:nowrap;-webkit-text-stroke:0.3px #b3b6b9;">Genres</div>
<div style="position:absolute;left:22px;top:677px;font-size:13.6px;line-height:13.6px;color:#b3b6b9;font-weight:400;white-space:nowrap;-webkit-text-stroke:0.3px #b3b6b9;">Soundpools</div>
<svg style="position:absolute;left:99px;top:679px;" width="12" height="12" viewBox="0 0 12 12"><g fill="#c8cacc"><rect x="0" y="1" width="4" height="1.6"/><rect x="0" y="4.5" width="6" height="1.6"/><rect x="0" y="8" width="10" height="1.6"/></g></svg>
<svg style="position:absolute;left:543px;top:678px;" width="12" height="14" viewBox="0 0 12 14"><path d="M1.5 2 L5.5 6 L10 0.5 M1.5 7.5 L5.5 11.5 L10 6" fill="none" stroke="#c8cacc" stroke-width="1.5"/></svg>
<div style="position:absolute;left:13px;top:699px;width:557px;height:57px;background:#2c3034;border-radius:4px;"></div>
<svg style="position:absolute;left:31px;top:712px;" width="28" height="31" viewBox="0 0 28 31"><path d="M8.5 10 V5 C8.5 2.8 10 1.5 12 1.5 H16 C18 1.5 19.5 2.8 19.5 5 V10" fill="none" stroke="#9a9b9c" stroke-width="2.4"/><rect x="0.5" y="9" width="27" height="21.5" rx="2.5" fill="#9a9b9c"/><path d="M6 26.5 V13 H10.2 L14 18.5 L17.8 13 H22 V26.5 H18.4 V19 L15 23.5 H13 L9.6 19 V26.5 Z" fill="#2c3034"/></svg>
<div style="position:absolute;left:72px;top:720px;font-size:14px;line-height:14px;color:#e8e8e8;font-weight:400;white-space:nowrap;-webkit-text-stroke:0.3px #e8e8e8;">Additional Soundpools</div>
<div style="position:absolute;left:13px;top:758px;width:557px;height:58px;background:#2c3034;border-radius:4px;"></div>
<svg style="position:absolute;left:13px;top:758px;" width="59" height="58" viewBox="0 0 59 58"><defs><linearGradient id="gdc" x1="0" y1="0" x2="0" y2="1"><stop offset="0" stop-color="#f7a11c"/><stop offset="0.55" stop-color="#f47a50"/><stop offset="0.8" stop-color="#f040a0"/><stop offset="1" stop-color="#ee3a9c"/></linearGradient></defs><rect width="59" height="58" rx="3" fill="url(#gdc)"/><rect x="8" y="4" width="45" height="44" fill="#5aa6f2"/><path d="M26 4 H53 V48 H22 C26 40 30 34 28 24 C27 16 24 10 26 4 Z" fill="#f4c21a"/><path d="M26 4 C23 12 27 18 27 26 C27 34 24 40 21 48" fill="none" stroke="#1a1a1a" stroke-width="1.6"/><path d="M40 32 L52 36 V48 H42 Z" fill="#e8502a"/><path d="M30 13 L36 12 M42 12 L49 13" stroke="#1a1a1a" stroke-width="1.3"/><path d="M31 16 C33 15 35 15 36 16 M42 16 C44 15 46 15 48 16" stroke="#1a1a1a" stroke-width="1"/><ellipse cx="38" cy="27.5" rx="3.8" ry="2.4" fill="#3a7ee8"/><text x="2" y="34" font-family="Liberation Sans" font-size="7.2" font-weight="700" fill="#ffffff" letter-spacing="0.6">DAME</text><text x="2" y="41" font-family="Liberation Sans" font-size="7.2" font-weight="700" fill="#ffffff" letter-spacing="0.6">CANDELA</text><rect x="10" y="49" width="14" height="2.5" fill="#f0f0f0"/><rect x="16" y="52" width="27" height="3.5" fill="#1a1a1a"/></svg>
<div style="position:absolute;left:86px;top:773px;font-size:13.5px;line-height:13.5px;color:#e8e8e8;font-weight:400;white-space:nowrap;-webkit-text-stroke:0.3px #e8e8e8;">Dame Candela - Part 2</div>
<div style="position:absolute;left:13px;top:817px;width:557px;height:58px;background:#2c3034;border-radius:4px;"></div>
<svg style="position:absolute;left:13px;top:817px;" width="59" height="58" viewBox="0 0 59 58"><rect width="59" height="58" fill="#5a5048"/><rect x="0" y="0" width="34" height="18" fill="#a84858"/><circle cx="22" cy="8" r="5" fill="#c89078"/><rect x="35" y="0" width="24" height="27" fill="#d6c6ae"/><path d="M40 27 C40 16 44 9 49 9 C54 9 57 16 57 27 Z" fill="#2c2a30"/><rect x="0" y="18" width="23" height="22" fill="#7f9ca2"/><circle cx="10" cy="26" r="4" fill="#c8a868"/><rect x="40" y="27" width="19" height="22" fill="#3a3036"/><rect x="0" y="40" width="34" height="18" fill="#e0dcd4"/><rect x="0" y="40" width="12" height="6" fill="#d8b840"/><rect x="37" y="45" width="22" height="13" fill="#4a5a90"/><circle cx="46" cy="48" r="4" fill="#2a2226"/><text x="31" y="22" text-anchor="middle" font-family="Liberation Sans" font-size="11" font-weight="700" fill="#ffffff" stroke="#222" stroke-width="0.4">dirty</text><text x="29" y="33" text-anchor="middle" font-family="Liberation Sans" font-size="11" font-weight="700" fill="#ffffff" stroke="#222" stroke-width="0.4">hip</text><text x="23" y="44" text-anchor="middle" font-family="Liberation Sans" font-size="11" font-weight="700" fill="#ffffff" stroke="#222" stroke-width="0.4">hop</text><rect x="33" y="37" width="8" height="7" fill="#b02020"/></svg>
<div style="position:absolute;left:86px;top:832px;font-size:13.5px;line-height:13.5px;color:#e8e8e8;font-weight:400;white-space:nowrap;-webkit-text-stroke:0.3px #e8e8e8;">Dirty HipHop - Part 2</div>
<div style="position:absolute;left:13px;top:877px;width:557px;height:58px;background:#2c3034;border-radius:4px;"></div>
<svg style="position:absolute;left:13px;top:877px;" width="59" height="58" viewBox="0 0 59 58"><defs><linearGradient id="ginf" x1="0" y1="0" x2="1" y2="0.3"><stop offset="0" stop-color="#6a3ec8"/><stop offset="1" stop-color="#2ea396"/></linearGradient><linearGradient id="ginf2" x1="0" y1="0" x2="0" y2="1"><stop offset="0" stop-color="#ffffff" stop-opacity="0"/><stop offset="1" stop-color="#e8e0ff" stop-opacity="0.85"/></linearGradient></defs><rect width="59" height="58" rx="3" fill="url(#ginf)"/><rect width="59" height="58" rx="3" fill="url(#ginf2)"/><text x="30" y="9" text-anchor="middle" font-family="Liberation Sans" font-size="7.5" font-weight="700" fill="#ffffff" letter-spacing="0.3">INFINITY</text><path d="M29 14 L46 40 H12 Z" fill="none" stroke="#f0ecff" stroke-width="0.9"/><path d="M0 30 L59 18 M5 58 L55 10" stroke="#ffffff" stroke-width="0.4" opacity="0.6"/><ellipse cx="30" cy="25" rx="5" ry="6.5" fill="#2a3c8a"/><path d="M14 58 C14 44 20 36 30 36 C40 36 46 44 46 58 Z" fill="#2c3e90"/><path d="M24 40 C28 38 33 38 37 41" stroke="#8aa8f0" stroke-width="1" fill="none"/><rect x="17" y="50" width="22" height="4" fill="#151515"/></svg>
<div style="position:absolute;left:86px;top:892px;font-size:13.5px;line-height:13.5px;color:#e8e8e8;font-weight:400;white-space:nowrap;-webkit-text-stroke:0.3px #e8e8e8;">Infinity - Part 2</div>
<div style="position:absolute;left:13px;top:936px;width:557px;height:58px;background:#2c3034;border-radius:4px;"></div>
<svg style="position:absolute;left:13px;top:936px;" width="59" height="58" viewBox="0 0 59 58"><rect width="59" height="58" fill="#221e20"/><text x="29" y="20" text-anchor="middle" font-family="Liberation Serif" font-size="10" fill="#ececec" transform="translate(29 0) scale(0.85 1) translate(-29 0)">MISE</text><text x="29" y="30" text-anchor="middle" font-family="Liberation Serif" font-size="10" fill="#ececec">EN</text><text x="29" y="41" text-anchor="middle" font-family="Liberation Serif" font-size="10" fill="#ececec" transform="translate(29 0) scale(0.85 1) translate(-29 0)">SCENE</text><path d="M24 42 L35 27" stroke="#c87a60" stroke-width="0.9"/><rect x="13" y="49" width="13" height="2.5" fill="#e8e8e8" opacity="0.75"/><rect x="20" y="52.5" width="18" height="2.5" fill="#e8e8e8" opacity="0.6"/></svg>
<div style="position:absolute;left:86px;top:951px;font-size:13.5px;line-height:13.5px;color:#e8e8e8;font-weight:400;white-space:nowrap;-webkit-text-stroke:0.3px #e8e8e8;">Mise-en-scene</div>
<div style="position:absolute;left:13px;top:995px;width:557px;height:58px;background:#2c3034;border-radius:4px;"></div>
<svg style="position:absolute;left:13px;top:995px;" width="59" height="58" viewBox="0 0 59 58"><defs><radialGradient id="gms" cx="0.5" cy="0.45" r="0.55"><stop offset="0" stop-color="#d8a070"/><stop offset="0.3" stop-color="#6a5040"/><stop offset="1" stop-color="#0c1620"/></radialGradient></defs><rect width="59" height="58" rx="3" fill="url(#gms)"/><text x="30" y="18" text-anchor="middle" font-family="Liberation Sans" font-size="6.5" fill="#f0e8e0">MODERN</text><text x="30" y="25" text-anchor="middle" font-family="Liberation Sans" font-size="6.5" fill="#f0e8e0">SCORE</text><path d="M0 22 L24 31 M59 22 L35 31 M0 47 L22 36 M59 47 L37 36" stroke="#c8a878" stroke-width="1.4"/><path d="M3 26 V44 M8 28 V42 M13 29.5 V40.5 M56 26 V44 M51 28 V42 M46 29.5 V40.5" stroke="#b09070" stroke-width="1"/><path d="M22 36 H37 L34 34 H25 Z" fill="#f0e0c8" opacity="0.8"/><rect x="28" y="37" width="3" height="14" fill="#f0a838"/><rect x="17" y="49" width="13" height="2.5" fill="#e8e8e8" opacity="0.8"/><rect x="23" y="52.5" width="14" height="3" fill="#e8e8e8" opacity="0.7"/></svg>
<div style="position:absolute;left:86px;top:1010px;font-size:13.5px;line-height:13.5px;color:#e8e8e8;font-weight:400;white-space:nowrap;-webkit-text-stroke:0.3px #e8e8e8;">Modern Score</div>
<div style="position:absolute;left:13px;top:1055px;width:557px;height:58px;background:#353a40;border-radius:4px;"></div>
<svg style="position:absolute;left:13px;top:1055px;" width="59" height="58" viewBox="0 0 59 58"><rect x="0.75" y="0.75" width="57.5" height="57" fill="#1c1719" stroke="#8fae96" stroke-width="1.5"/><path d="M7 22 L38 7 L40 12 L10 27 Z" fill="#b82424"/><path d="M8 28 L28 20" stroke="#a02020" stroke-width="2"/><path d="M33 58 C33 42 35 32 40 30 L48 22 L50 24 L44 33 C46 40 46 50 45 58 Z" fill="#cfcfc4"/></svg>
<div style="position:absolute;left:86px;top:1070px;font-size:13.5px;line-height:13.5px;color:#8a8e92;font-weight:400;white-space:nowrap;-webkit-text-stroke:0.3px #8a8e92;">Nostalgia Drive</div>
<div style="position:absolute;left:0px;top:1066px;width:572px;height:20px;background:linear-gradient(to bottom, rgba(34,37,40,0) 0%, rgba(34,37,40,1) 100%);"></div>
<div style="position:absolute;left:0px;top:1083px;width:572px;height:30px;background:#222528;"></div>
<div style="position:absolute;left:573px;top:701px;width:8px;height:274px;background:#3d434a;border-radius:4px;"></div>
<div style="position:absolute;left:13px;top:1092px;font-size:12px;line-height:12px;color:#a9adb1;font-weight:400;white-space:nowrap;-webkit-text-stroke:0.3px #a9adb1;">1 Soundpool selected, 8 instruments selected, 101 Loops.</div>
<div style="position:absolute;left:593px;top:677px;font-size:14px;line-height:14px;color:#b3b6b9;font-weight:400;white-space:nowrap;-webkit-text-stroke:0.3px #b3b6b9;">Instruments</div>
<svg style="position:absolute;left:1128px;top:678px;" width="12" height="14" viewBox="0 0 12 14"><path d="M1.5 2 L5.5 6 L10 0.5 M1.5 7.5 L5.5 11.5 L10 6" fill="none" stroke="#c8cacc" stroke-width="1.5"/></svg>
<div style="position:absolute;left:584px;top:699px;width:571px;height:36px;background:#2c2f33;border-radius:4px;"></div>
<div style="position:absolute;left:629px;top:709px;font-size:14px;line-height:14px;color:#66bde6;font-weight:400;white-space:nowrap;-webkit-text-stroke:0.3px #66bde6;">Bass</div>
<div style="position:absolute;left:1036px;top:709px;width:100px;text-align:right;font-size:14px;line-height:14px;color:#66bde6;-webkit-text-stroke:0.3px #66bde6;">8</div>
<svg style="position:absolute;left:597px;top:707px;" width="20" height="20" viewBox="0 0 20 20"><path d="M1.5 19 L3 16.2 L4 13.6 L13.6 3 C14.5 2 16 1.6 17 2.4 C17.9 3.2 17.8 4.6 17.2 5.6 L14.3 10.5 L12.3 15.2 C11 17.5 8 18.6 5 18.8 Z" fill="#66bde6"/><g fill="#66bde6"><circle cx="2.9" cy="10" r="1.3"/><circle cx="5.9" cy="7.1" r="1.3"/><circle cx="8.8" cy="4.3" r="1.3"/><circle cx="11.7" cy="1.5" r="1.3"/></g><g fill="#2c2f33" opacity="0.7"><circle cx="6.6" cy="13.1" r="0.7"/><circle cx="9.2" cy="10.3" r="0.7"/><circle cx="11.9" cy="7.4" r="0.7"/><circle cx="14.6" cy="4.6" r="0.7"/></g></svg>
<div style="position:absolute;left:584px;top:737px;width:571px;height:36px;background:#2c2f33;border-radius:4px;"></div>
<div style="position:absolute;left:629px;top:747px;font-size:14px;line-height:14px;color:#6ddf9a;font-weight:400;white-space:nowrap;-webkit-text-stroke:0.3px #6ddf9a;">Drums</div>
<div style="position:absolute;left:1036px;top:747px;width:100px;text-align:right;font-size:14px;line-height:14px;color:#6ddf9a;-webkit-text-stroke:0.3px #6ddf9a;">47</div>
<svg style="position:absolute;left:596px;top:745px;" width="22" height="20" viewBox="0 0 22 20"><rect x="5.5" y="1" width="4.3" height="1.9" fill="#6ddf9a"/><rect x="11" y="1" width="4" height="1.9" fill="#6ddf9a"/><rect x="0.5" y="4.5" width="5" height="6.5" fill="#6ddf9a"/><rect x="15.5" y="4.5" width="5" height="4" fill="#6ddf9a"/><circle cx="10.5" cy="11.3" r="6" fill="none" stroke="#6ddf9a" stroke-width="1.6"/><path d="M5.5 18.5 L7 16 M15.5 18.5 L14 16" stroke="#6ddf9a" stroke-width="1.5"/></svg>
<div style="position:absolute;left:584px;top:774px;width:571px;height:36px;background:#2c2f33;border-radius:4px;"></div>
<div style="position:absolute;left:629px;top:784px;font-size:14px;line-height:14px;color:#6ede8a;font-weight:400;white-space:nowrap;-webkit-text-stroke:0.3px #6ede8a;">Fx</div>
<div style="position:absolute;left:1036px;top:784px;width:100px;text-align:right;font-size:14px;line-height:14px;color:#6ede8a;-webkit-text-stroke:0.3px #6ede8a;">13</div>
<svg style="position:absolute;left:596px;top:782px;" width="21" height="21" viewBox="0 0 21 21"><polygon points="20.0,10.0 15.2,11.9 17.7,16.4 12.8,14.8 11.7,19.8 9.0,15.4 5.0,18.7 5.8,13.5 0.6,13.4 4.5,10.0 0.6,6.6 5.8,6.5 5.0,1.3 9.0,4.6 11.7,0.2 12.7,5.2 17.7,3.6 15.2,8.1" fill="none" stroke="#6ede8a" stroke-width="1.3"/><circle cx="10" cy="10" r="3" fill="#6ede8a"/></svg>
<div style="position:absolute;left:584px;top:812px;width:571px;height:36px;background:#2c2f33;border-radius:4px;"></div>
<div style="position:absolute;left:629px;top:822px;font-size:14px;line-height:14px;color:#78df70;font-weight:400;white-space:nowrap;-webkit-text-stroke:0.3px #78df70;">Guitar</div>
<div style="position:absolute;left:1036px;top:822px;width:100px;text-align:right;font-size:14px;line-height:14px;color:#78df70;-webkit-text-stroke:0.3px #78df70;">4</div>
<svg style="position:absolute;left:597px;top:820px;" width="20" height="20" viewBox="0 0 20 20"><circle cx="6.5" cy="14" r="5.6" fill="#78df70"/><circle cx="9.8" cy="10.3" r="3.8" fill="#78df70"/><path d="M10 10.5 L17.5 2.3" stroke="#78df70" stroke-width="1.8"/><circle cx="18" cy="1.9" r="1.7" fill="#78df70"/><circle cx="9.6" cy="10.4" r="1.3" fill="#2c2f33"/></svg>
<div style="position:absolute;left:584px;top:849px;width:571px;height:36px;background:#2c2f33;border-radius:4px;"></div>
<div style="position:absolute;left:629px;top:859px;font-size:14px;line-height:14px;color:#d6df6a;font-weight:400;white-space:nowrap;-webkit-text-stroke:0.3px #d6df6a;">Keys</div>
<div style="position:absolute;left:1036px;top:859px;width:100px;text-align:right;font-size:14px;line-height:14px;color:#d6df6a;-webkit-text-stroke:0.3px #d6df6a;">6</div>
<svg style="position:absolute;left:597px;top:857px;" width="20" height="20" viewBox="0 0 20 20"><circle cx="9.5" cy="9.8" r="8.3" fill="none" stroke="#d6df6a" stroke-width="2"/><circle cx="9.2" cy="10.2" r="4.6" fill="#d6df6a"/><circle cx="12.3" cy="6.8" r="1.9" fill="#d6df6a"/></svg>
<div style="position:absolute;left:584px;top:887px;width:571px;height:36px;background:#2c2f33;border-radius:4px;"></div>
<div style="position:absolute;left:629px;top:897px;font-size:14px;line-height:14px;color:#f07a6a;font-weight:400;white-space:nowrap;-webkit-text-stroke:0.3px #f07a6a;">Pads</div>
<div style="position:absolute;left:1036px;top:897px;width:100px;text-align:right;font-size:14px;line-height:14px;color:#f07a6a;-webkit-text-stroke:0.3px #f07a6a;">8</div>
<svg style="position:absolute;left:597px;top:896px;" width="20" height="19" viewBox="0 0 20 19"><rect x="1.5" y="1" width="16" height="5.5" fill="#f07a6a"/><g fill="#2c2f33"><rect x="3.5" y="2.3" width="0.8" height="3"/><rect x="5.5" y="2.3" width="0.8" height="3"/><rect x="7.5" y="2.3" width="0.8" height="3"/><rect x="9.5" y="2.3" width="0.8" height="3"/><circle cx="14" cy="3.8" r="1.1"/></g><rect x="1.5" y="8" width="16" height="9.5" fill="#f07a6a"/><g fill="#2c2f33"><rect x="5.3" y="8" width="1.1" height="6"/><rect x="9.1" y="8" width="1.1" height="6"/><rect x="12.9" y="8" width="1.1" height="6"/></g></svg>
<div style="position:absolute;left:584px;top:925px;width:571px;height:36px;background:#2c2f33;border-radius:4px;"></div>
<div style="position:absolute;left:629px;top:935px;font-size:14px;line-height:14px;color:#f070a0;font-weight:400;white-space:nowrap;-webkit-text-stroke:0.3px #f070a0;">Sequences</div>
<div style="position:absolute;left:1036px;top:935px;width:100px;text-align:right;font-size:14px;line-height:14px;color:#f070a0;-webkit-text-stroke:0.3px #f070a0;">5</div>
<svg style="position:absolute;left:597px;top:934px;" width="20" height="19" viewBox="0 0 20 19"><rect x="1.5" y="1" width="16" height="5.5" fill="#f070a0"/><g fill="#2c2f33"><rect x="3.5" y="2.3" width="0.8" height="3"/><rect x="5.5" y="2.3" width="0.8" height="3"/><rect x="7.5" y="2.3" width="0.8" height="3"/><rect x="9.5" y="2.3" width="0.8" height="3"/><circle cx="14" cy="3.8" r="1.1"/></g><rect x="1.5" y="8" width="16" height="9.5" fill="#f070a0"/><g fill="#2c2f33"><rect x="5.3" y="8" width="1.1" height="6"/><rect x="9.1" y="8" width="1.1" height="6"/><rect x="12.9" y="8" width="1.1" height="6"/></g></svg>
<div style="position:absolute;left:584px;top:962px;width:571px;height:36px;background:#2c2f33;border-radius:4px;"></div>
<div style="position:absolute;left:629px;top:972px;font-size:14px;line-height:14px;color:#cc6ef0;font-weight:400;white-space:nowrap;-webkit-text-stroke:0.3px #cc6ef0;">Synth</div>
<div style="position:absolute;left:1036px;top:972px;width:100px;text-align:right;font-size:14px;line-height:14px;color:#cc6ef0;-webkit-text-stroke:0.3px #cc6ef0;">10</div>
<svg style="position:absolute;left:597px;top:971px;" width="20" height="19" viewBox="0 0 20 19"><rect x="1.5" y="1" width="16" height="5.5" fill="#cc6ef0"/><g fill="#2c2f33"><rect x="3.5" y="2.3" width="0.8" height="3"/><rect x="5.5" y="2.3" width="0.8" height="3"/><rect x="7.5" y="2.3" width="0.8" height="3"/><rect x="9.5" y="2.3" width="0.8" height="3"/><circle cx="14" cy="3.8" r="1.1"/></g><rect x="1.5" y="8" width="16" height="9.5" fill="#cc6ef0"/><g fill="#2c2f33"><rect x="5.3" y="8" width="1.1" height="6"/><rect x="9.1" y="8" width="1.1" height="6"/><rect x="12.9" y="8" width="1.1" height="6"/></g></svg>
<div style="position:absolute;left:1168px;top:621px;width:9px;height:490px;background:#353a40;"></div>
<svg style="position:absolute;left:1170px;top:855px;" width="6" height="22" viewBox="0 0 6 22"><rect x="0" y="0.0" width="1.3" height="1.3" fill="#8a8e93"/><rect x="3" y="0.0" width="1.3" height="1.3" fill="#8a8e93"/><rect x="0" y="3.4" width="1.3" height="1.3" fill="#8a8e93"/><rect x="3" y="3.4" width="1.3" height="1.3" fill="#8a8e93"/><rect x="0" y="6.8" width="1.3" height="1.3" fill="#8a8e93"/><rect x="3" y="6.8" width="1.3" height="1.3" fill="#8a8e93"/><rect x="0" y="10.2" width="1.3" height="1.3" fill="#8a8e93"/><rect x="3" y="10.2" width="1.3" height="1.3" fill="#8a8e93"/><rect x="0" y="13.6" width="1.3" height="1.3" fill="#8a8e93"/><rect x="3" y="13.6" width="1.3" height="1.3" fill="#8a8e93"/><rect x="0" y="17.0" width="1.3" height="1.3" fill="#8a8e93"/><rect x="3" y="17.0" width="1.3" height="1.3" fill="#8a8e93"/><rect x="0" y="20.4" width="1.3" height="1.3" fill="#8a8e93"/><rect x="3" y="20.4" width="1.3" height="1.3" fill="#8a8e93"/></svg>
<div style="position:absolute;left:1177px;top:621px;width:769px;height:490px;background:#222528;"></div>
<div style="position:absolute;left:1177px;top:621px;width:59px;height:490px;background:#212427;"></div>
<div style="position:absolute;left:1191px;top:628px;font-size:13.3px;line-height:13.3px;color:#aeb1b4;font-weight:400;white-space:nowrap;-webkit-text-stroke:0.3px #aeb1b4;">Pitch</div>
<div style="position:absolute;left:1280px;top:628px;font-size:14px;line-height:14px;color:#aeb1b4;font-weight:400;white-space:nowrap;-webkit-text-stroke:0.3px #aeb1b4;">Loop name</div>
<div style="position:absolute;left:1500px;top:628px;font-size:14px;line-height:14px;color:#aeb1b4;font-weight:400;white-space:nowrap;-webkit-text-stroke:0.3px #aeb1b4;">Preview</div>
<div style="position:absolute;left:1688px;top:628px;font-size:13px;line-height:13px;color:#aeb1b4;font-weight:400;white-space:nowrap;-webkit-text-stroke:0.3px #aeb1b4;">BPM</div>
<div style="position:absolute;left:1743px;top:628px;font-size:14px;line-height:14px;color:#aeb1b4;font-weight:400;white-space:nowrap;-webkit-text-stroke:0.3px #aeb1b4;">Length</div>
<div style="position:absolute;left:1816px;top:628px;font-size:14px;line-height:14px;color:#aeb1b4;font-weight:400;white-space:nowrap;-webkit-text-stroke:0.3px #aeb1b4;">Harmony</div>
<svg style="position:absolute;left:1910px;top:629px;" width="13" height="11" viewBox="0 0 13 11"><path d="M6.5 10.5 L1.5 5.5 C0.3 4.3 0.3 2.4 1.5 1.3 C2.7 0.2 4.5 0.4 5.6 1.5 L6.5 2.4 L7.4 1.5 C8.5 0.4 10.3 0.2 11.5 1.3 C12.7 2.4 12.7 4.3 11.5 5.5 Z" fill="#8e9092"/></svg>
<div style="position:absolute;left:1236px;top:649px;width:699px;height:37px;background:#2e505c;border:2px solid #66c0e0;"></div>
<div style="position:absolute;left:1280px;top:661px;font-size:13.5px;line-height:13.5px;color:#74c5e6;font-weight:400;white-space:nowrap;-webkit-text-stroke:0.3px #74c5e6;">Don&#39;t Hate Bass A</div>
<div style="position:absolute;left:1688px;top:661px;font-size:14px;line-height:14px;color:#74c5e6;font-weight:400;white-space:nowrap;-webkit-text-stroke:0.3px #74c5e6;">172</div>
<div style="position:absolute;left:1742px;top:661px;font-size:13.2px;line-height:13.2px;color:#74c5e6;font-weight:400;white-space:nowrap;-webkit-text-stroke:0.3px #74c5e6;">8 Bars</div>
<div style="position:absolute;left:1816px;top:661px;font-size:14px;line-height:14px;color:#74c5e6;font-weight:400;white-space:nowrap;-webkit-text-stroke:0.3px #74c5e6;">a-Minor</div>
<svg style="position:absolute;left:1909px;top:662px;" width="14" height="13" viewBox="0 0 14 13"><path d="M7 11 L2.3 6.3 C1.1 5.1 1.1 3.1 2.3 2 C3.5 0.9 5.4 1.1 6.3 2.3 L7 3.1 L7.7 2.3 C8.6 1.1 10.5 0.9 11.7 2 C12.9 3.1 12.9 5.1 11.7 6.3 Z" fill="none" stroke="#74c5e6" stroke-width="1.3"/></svg>
<svg style="position:absolute;left:1495px;top:653px;" width="180" height="30" viewBox="0 0 180 30"><path d="M0.5,14.4V15.6M1.5,3.8V26.2M2.5,0.7V29.3M3.5,0.8V29.2M4.5,1.3V28.7M5.5,1.4V28.6M6.5,1.4V28.6M7.5,1.2V28.8M8.5,1.5V28.5M9.5,1.1V28.9M10.5,1.2V28.8M11.5,0.9V29.1M12.5,1.1V28.9M13.5,14.4V15.6M14.5,14.4V15.6M15.5,14.4V15.6M16.5,14.4V15.6M17.5,14.4V15.6M18.5,3.8V26.2M19.5,1.0V29.0M20.5,1.2V28.8M21.5,0.8V29.2M22.5,1.0V29.0M23.5,1.5V28.5M24.5,1.0V29.0M25.5,1.4V28.6M26.5,1.3V28.7M27.5,1.0V29.0M28.5,1.6V28.4M29.5,1.4V28.6M30.5,14.4V15.6M31.5,14.4V15.6M32.5,3.1V26.9M33.5,9.7V20.3M34.5,1.9V28.1M35.5,12.3V17.7M36.5,9.6V20.4M37.5,7.3V22.7M38.5,12.4V17.6M39.5,14.4V15.6M40.5,14.4V15.6M41.5,14.4V15.6M42.5,14.4V15.6M43.5,14.4V15.6M44.5,14.4V15.6M45.5,14.4V15.6M46.5,4.5V25.5M47.5,0.7V29.3M48.5,0.8V29.2M49.5,1.1V28.9M50.5,0.9V29.1M51.5,1.1V28.9M52.5,0.7V29.3M53.5,1.0V29.0M54.5,1.1V28.9M55.5,0.9V29.1M56.5,1.6V28.4M57.5,4.5V25.5M58.5,14.4V15.6M59.5,14.4V15.6M60.5,14.4V15.6M61.5,14.4V15.6M62.5,14.4V15.6M63.5,3.8V26.2M64.5,1.2V28.8M65.5,0.6V29.4M66.5,1.2V28.8M67.5,0.7V29.3M68.5,1.1V28.9M69.5,0.8V29.2M70.5,0.9V29.1M71.5,1.3V28.7M72.5,1.0V29.0M73.5,1.7V28.3M74.5,1.7V28.3M75.5,14.4V15.6M76.5,14.4V15.6M77.5,6.6V23.4M78.5,5.8V24.2M79.5,10.4V19.6M80.5,13.5V16.5M81.5,9.6V20.4M82.5,10.5V19.5M83.5,9.6V20.4M84.5,14.4V15.6M85.5,14.4V15.6M86.5,14.4V15.6M87.5,14.4V15.6M88.5,14.4V15.6M89.5,14.4V15.6M90.5,14.4V15.6M91.5,3.8V26.2M92.5,0.8V29.2M93.5,0.7V29.3M94.5,0.6V29.4M95.5,0.7V29.3M96.5,1.2V28.8M97.5,1.5V28.5M98.5,1.6V28.4M99.5,1.5V28.5M100.5,1.5V28.5M101.5,1.8V28.2M102.5,1.8V28.2M103.5,14.4V15.6M104.5,14.4V15.6M105.5,14.4V15.6M106.5,14.4V15.6M107.5,14.4V15.6M108.5,3.8V26.2M109.5,0.7V29.3M110.5,1.1V28.9M111.5,1.1V28.9M112.5,0.7V29.3M113.5,1.1V28.9M114.5,1.5V28.5M115.5,1.3V28.7M116.5,1.0V29.0M117.5,1.7V28.3M118.5,1.3V28.7M119.5,4.5V25.5M120.5,14.4V15.6M121.5,14.4V15.6M122.5,6.0V24.0M123.5,0.8V29.2M124.5,3.3V26.7M125.5,6.1V23.9M126.5,11.1V18.9M127.5,10.5V19.5M128.5,12.3V17.7M129.5,14.4V15.6M130.5,14.4V15.6M131.5,14.4V15.6M132.5,14.4V15.6M133.5,14.4V15.6M134.5,14.4V15.6M135.5,14.4V15.6M136.5,3.8V26.2M137.5,0.6V29.4M138.5,1.1V28.9M139.5,0.5V29.5M140.5,0.7V29.3M141.5,0.8V29.2M142.5,1.1V28.9M143.5,4.5V25.5M144.5,1.4V28.6M145.5,1.1V28.9M146.5,1.4V28.6M147.5,1.0V29.0M148.5,14.4V15.6M149.5,14.4V15.6M150.5,14.4V15.6M151.5,14.4V15.6M152.5,14.4V15.6M153.5,3.8V26.2M154.5,1.1V28.9M155.5,1.1V28.9M156.5,0.6V29.4M157.5,1.0V29.0M158.5,0.8V29.2M159.5,1.0V29.0M160.5,0.9V29.1M161.5,1.3V28.7M162.5,1.1V28.9M163.5,1.1V28.9M164.5,1.5V28.5M165.5,14.4V15.6M166.5,14.4V15.6M167.5,0.0V30.0M168.5,4.1V25.9M169.5,11.5V18.5M170.5,12.2V17.8M171.5,12.1V17.9M172.5,6.1V23.9M173.5,7.9V22.1M174.5,14.4V15.6M175.5,14.4V15.6M176.5,14.4V15.6M177.5,14.4V15.6M178.5,14.4V15.6M179.5,14.4V15.6" stroke="#6ab8d4" stroke-width="1" fill="none"/><path d="" stroke="#6ab8d4" stroke-width="1" fill="none" opacity="0.85"/></svg>
<div style="position:absolute;left:1236px;top:688px;width:699px;height:35px;background:#2c3034;"></div>
<div style="position:absolute;left:1280px;top:699px;font-size:13.5px;line-height:13.5px;color:#74c5e6;font-weight:400;white-space:nowrap;-webkit-text-stroke:0.3px #74c5e6;">Don&#39;t Hate Bass B</div>
<div style="position:absolute;left:1688px;top:699px;font-size:14px;line-height:14px;color:#74c5e6;font-weight:400;white-space:nowrap;-webkit-text-stroke:0.3px #74c5e6;">172</div>
<div style="position:absolute;left:1742px;top:699px;font-size:13.2px;line-height:13.2px;color:#74c5e6;font-weight:400;white-space:nowrap;-webkit-text-stroke:0.3px #74c5e6;">8 Bars</div>
<div style="position:absolute;left:1816px;top:699px;font-size:14px;line-height:14px;color:#74c5e6;font-weight:400;white-space:nowrap;-webkit-text-stroke:0.3px #74c5e6;">a-Minor</div>
<svg style="position:absolute;left:1909px;top:700px;" width="14" height="13" viewBox="0 0 14 13"><path d="M7 11 L2.3 6.3 C1.1 5.1 1.1 3.1 2.3 2 C3.5 0.9 5.4 1.1 6.3 2.3 L7 3.1 L7.7 2.3 C8.6 1.1 10.5 0.9 11.7 2 C12.9 3.1 12.9 5.1 11.7 6.3 Z" fill="none" stroke="#74c5e6" stroke-width="1.3"/></svg>
<svg style="position:absolute;left:1495px;top:691px;" width="180" height="30" viewBox="0 0 180 30"><path d="M0.5,14.4V15.6M1.5,3.8V26.2M2.5,0.4V29.6M3.5,1.0V29.0M4.5,4.5V25.5M5.5,0.6V29.4M6.5,1.0V29.0M7.5,1.2V28.8M8.5,0.9V29.1M9.5,1.5V28.5M10.5,1.5V28.5M11.5,1.6V28.4M12.5,1.8V28.2M13.5,14.4V15.6M14.5,14.4V15.6M15.5,14.4V15.6M16.5,14.4V15.6M17.5,14.4V15.6M18.5,3.8V26.2M19.5,0.7V29.3M20.5,0.9V29.1M21.5,0.9V29.1M22.5,4.5V25.5M23.5,1.1V28.9M24.5,1.6V28.4M25.5,1.5V28.5M26.5,1.0V29.0M27.5,1.5V28.5M28.5,1.3V28.7M29.5,1.8V28.2M30.5,14.4V15.6M31.5,14.4V15.6M32.5,10.0V20.0M33.5,9.9V20.1M34.5,4.4V25.6M35.5,8.1V21.9M36.5,8.2V21.8M37.5,7.3V22.7M38.5,7.2V22.8M39.5,14.4V15.6M40.5,14.4V15.6M41.5,14.4V15.6M42.5,14.4V15.6M43.5,14.4V15.6M44.5,14.4V15.6M45.5,14.4V15.6M46.5,3.8V26.2M47.5,0.8V29.2M48.5,0.7V29.3M49.5,0.9V29.1M50.5,0.6V29.4M51.5,0.7V29.3M52.5,1.3V28.7M53.5,0.8V29.2M54.5,1.6V28.4M55.5,1.4V28.6M56.5,1.6V28.4M57.5,1.3V28.7M58.5,14.4V15.6M59.5,14.4V15.6M60.5,14.4V15.6M61.5,14.4V15.6M62.5,14.4V15.6M63.5,3.8V26.2M64.5,0.6V29.4M65.5,1.2V28.8M66.5,0.5V29.5M67.5,0.6V29.4M68.5,1.1V28.9M69.5,0.8V29.2M70.5,1.2V28.8M71.5,1.4V28.6M72.5,1.5V28.5M73.5,1.8V28.2M74.5,4.5V25.5M75.5,14.4V15.6M76.5,14.4V15.6M77.5,8.8V21.2M78.5,5.4V24.6M79.5,7.5V22.5M80.5,12.8V17.2M81.5,4.3V25.7M82.5,7.1V22.9M83.5,6.8V23.2M84.5,14.4V15.6M85.5,14.4V15.6M86.5,14.4V15.6M87.5,14.4V15.6M88.5,14.4V15.6M89.5,14.4V15.6M90.5,14.4V15.6M91.5,3.8V26.2M92.5,1.2V28.8M93.5,1.1V28.9M94.5,1.0V29.0M95.5,0.7V29.3M96.5,1.4V28.6M97.5,1.1V28.9M98.5,1.6V28.4M99.5,1.1V28.9M100.5,1.7V28.3M101.5,1.3V28.7M102.5,1.8V28.2M103.5,14.4V15.6M104.5,14.4V15.6M105.5,14.4V15.6M106.5,14.4V15.6M107.5,14.4V15.6M108.5,3.8V26.2M109.5,0.9V29.1M110.5,0.8V29.2M111.5,1.1V28.9M112.5,1.0V29.0M113.5,1.4V28.6M114.5,1.5V28.5M115.5,1.4V28.6M116.5,1.0V29.0M117.5,1.3V28.7M118.5,4.5V25.5M119.5,4.5V25.5M120.5,14.4V15.6M121.5,14.4V15.6M122.5,3.1V26.9M123.5,6.3V23.7M124.5,11.3V18.7M125.5,8.5V21.5M126.5,4.7V25.3M127.5,12.6V17.4M128.5,7.8V22.2M129.5,14.4V15.6M130.5,14.4V15.6M131.5,14.4V15.6M132.5,14.4V15.6M133.5,14.4V15.6M134.5,14.4V15.6M135.5,14.4V15.6M136.5,3.8V26.2M137.5,0.5V29.5M138.5,0.9V29.1M139.5,0.5V29.5M140.5,0.7V29.3M141.5,0.9V29.1M142.5,1.3V28.7M143.5,1.5V28.5M144.5,1.0V29.0M145.5,1.6V28.4M146.5,1.1V28.9M147.5,1.3V28.7M148.5,14.4V15.6M149.5,14.4V15.6M150.5,14.4V15.6M151.5,14.4V15.6M152.5,14.4V15.6M153.5,3.8V26.2M154.5,0.8V29.2M155.5,0.9V29.1M156.5,0.5V29.5M157.5,1.0V29.0M158.5,0.6V29.4M159.5,4.5V25.5M160.5,1.3V28.7M161.5,1.2V28.8M162.5,4.5V25.5M163.5,1.6V28.4M164.5,1.5V28.5M165.5,14.4V15.6M166.5,14.4V15.6M167.5,13.2V16.8M168.5,9.5V20.5M169.5,10.8V19.2M170.5,7.3V22.7M171.5,8.5V21.5M172.5,7.4V22.6M173.5,8.9V21.1M174.5,14.4V15.6M175.5,14.4V15.6M176.5,14.4V15.6M177.5,14.4V15.6M178.5,14.4V15.6M179.5,14.4V15.6" stroke="#6ab8d4" stroke-width="1" fill="none"/><path d="" stroke="#6ab8d4" stroke-width="1" fill="none" opacity="0.85"/></svg>
<div style="position:absolute;left:1236px;top:725px;width:699px;height:36px;background:#2c3034;"></div>
<div style="position:absolute;left:1280px;top:736px;font-size:13.5px;line-height:13.5px;color:#74c5e6;font-weight:400;white-space:nowrap;-webkit-text-stroke:0.3px #74c5e6;">Saturday Bright Lights Bass A</div>
<div style="position:absolute;left:1688px;top:736px;font-size:14px;line-height:14px;color:#74c5e6;font-weight:400;white-space:nowrap;-webkit-text-stroke:0.3px #74c5e6;">172</div>
<div style="position:absolute;left:1742px;top:736px;font-size:13.2px;line-height:13.2px;color:#74c5e6;font-weight:400;white-space:nowrap;-webkit-text-stroke:0.3px #74c5e6;">8 Bars</div>
<div style="position:absolute;left:1816px;top:736px;font-size:14px;line-height:14px;color:#74c5e6;font-weight:400;white-space:nowrap;-webkit-text-stroke:0.3px #74c5e6;">a-Minor</div>
<svg style="position:absolute;left:1909px;top:737px;" width="14" height="13" viewBox="0 0 14 13"><path d="M7 11 L2.3 6.3 C1.1 5.1 1.1 3.1 2.3 2 C3.5 0.9 5.4 1.1 6.3 2.3 L7 3.1 L7.7 2.3 C8.6 1.1 10.5 0.9 11.7 2 C12.9 3.1 12.9 5.1 11.7 6.3 Z" fill="none" stroke="#74c5e6" stroke-width="1.3"/></svg>
<svg style="position:absolute;left:1495px;top:728px;" width="180" height="30" viewBox="0 0 180 30"><path d="M0.5,3.1V26.9M1.5,3.5V26.5M2.5,2.5V27.5M3.5,2.7V27.3M4.5,3.6V26.4M5.5,2.3V27.7M6.5,2.4V27.6M7.5,3.2V26.8M8.5,2.6V27.4M9.5,2.1V27.9M10.5,2.4V27.6M11.5,2.3V27.7M12.5,1.5V28.5M13.5,3.1V26.9M14.5,3.2V26.8M15.5,2.6V27.4M16.5,2.6V27.4M17.5,1.4V28.6M18.5,2.5V27.5M19.5,3.1V26.9M20.5,3.0V27.0M21.5,3.0V27.0M22.5,4.1V25.9M23.5,3.2V26.8M24.5,3.3V26.7M25.5,3.8V26.2M26.5,4.0V26.0M27.5,3.6V26.4M28.5,3.9V26.1M29.5,4.7V25.3M30.5,3.9V26.1M31.5,2.7V27.3M32.5,5.0V25.0M33.5,4.1V25.9M34.5,4.1V25.9M35.5,4.3V25.7M36.5,4.3V25.7M37.5,3.6V26.4M38.5,3.4V26.6M39.5,4.8V25.2M40.5,3.5V26.5M41.5,3.9V26.1M42.5,4.1V25.9M43.5,4.0V26.0M44.5,4.0V26.0M45.5,2.6V27.4M46.5,2.7V27.3M47.5,2.5V27.5M48.5,3.4V26.6M49.5,1.4V28.6M50.5,3.5V26.5M51.5,2.8V27.2M52.5,3.2V26.8M53.5,2.9V27.1M54.5,3.3V26.7M55.5,2.0V28.0M56.5,1.9V28.1M57.5,2.0V28.0M58.5,2.8V27.2M59.5,1.9V28.1M60.5,3.0V27.0M61.5,1.7V28.3M62.5,3.6V26.4M63.5,3.4V26.6M64.5,3.6V26.4M65.5,3.3V26.7M66.5,3.6V26.4M67.5,3.0V27.0M68.5,3.5V26.5M69.5,3.2V26.8M70.5,2.1V27.9M71.5,3.7V26.3M72.5,3.8V26.2M73.5,3.0V27.0M74.5,3.6V26.4M75.5,4.4V25.6M76.5,4.6V25.4M77.5,3.6V26.4M78.5,4.1V25.9M79.5,4.2V25.8M80.5,4.8V25.2M81.5,4.6V25.4M82.5,4.1V25.9M83.5,3.4V26.6M84.5,4.0V26.0M85.5,4.3V25.7M86.5,3.9V26.1M87.5,4.0V26.0M88.5,3.3V26.7M89.5,2.9V27.1M90.5,3.3V26.7M91.5,3.3V26.7M92.5,3.6V26.4M93.5,2.2V27.8M94.5,2.8V27.2M95.5,2.1V27.9M96.5,3.0V27.0M97.5,2.7V27.3M98.5,1.9V28.1M99.5,0.5V29.5M100.5,3.3V26.7M101.5,2.0V28.0M102.5,1.0V29.0M103.5,2.9V27.1M104.5,2.3V27.7M105.5,2.2V27.8M106.5,3.6V26.4M107.5,3.0V27.0M108.5,2.5V27.5M109.5,3.1V26.9M110.5,3.5V26.5M111.5,4.3V25.7M112.5,4.1V25.9M113.5,3.6V26.4M114.5,4.5V25.5M115.5,3.8V26.2M116.5,4.7V25.3M117.5,4.2V25.8M118.5,4.4V25.6M119.5,2.7V27.3M120.5,4.6V25.4M121.5,3.7V26.3M122.5,3.8V26.2M123.5,4.7V25.3M124.5,3.6V26.4M125.5,3.0V27.0M126.5,4.1V25.9M127.5,4.2V25.8M128.5,3.7V26.3M129.5,2.7V27.3M130.5,3.9V26.1M131.5,3.3V26.7M132.5,3.0V27.0M133.5,3.3V26.7M134.5,2.5V27.5M135.5,2.6V27.4M136.5,3.4V26.6M137.5,3.2V26.8M138.5,2.8V27.2M139.5,3.1V26.9M140.5,2.4V27.6M141.5,3.1V26.9M142.5,3.0V27.0M143.5,3.1V26.9M144.5,3.2V26.8M145.5,2.0V28.0M146.5,2.3V27.7M147.5,2.0V28.0M148.5,3.2V26.8M149.5,1.0V29.0M150.5,2.7V27.3M151.5,3.3V26.7M152.5,2.2V27.8M153.5,3.7V26.3M154.5,2.8V27.2M155.5,2.9V27.1M156.5,3.9V26.1M157.5,3.3V26.7M158.5,4.6V25.4M159.5,4.2V25.8M160.5,4.6V25.4M161.5,2.1V27.9M162.5,4.4V25.6M163.5,2.4V27.6M164.5,5.0V25.0M165.5,3.7V26.3M166.5,4.0V26.0M167.5,4.6V25.4M168.5,3.6V26.4M169.5,4.6V25.4M170.5,4.4V25.6M171.5,4.8V25.2M172.5,3.3V26.7M173.5,1.7V28.3M174.5,4.1V25.9M175.5,2.9V27.1M176.5,3.6V26.4M177.5,3.4V26.6M178.5,2.5V27.5M179.5,2.6V27.4" stroke="#6ab8d4" stroke-width="1" fill="none"/><path d="" stroke="#6ab8d4" stroke-width="1" fill="none" opacity="0.85"/></svg>
<div style="position:absolute;left:1236px;top:763px;width:699px;height:35px;background:#2c3034;"></div>
<div style="position:absolute;left:1280px;top:774px;font-size:13.5px;line-height:13.5px;color:#74c5e6;font-weight:400;white-space:nowrap;-webkit-text-stroke:0.3px #74c5e6;">Saturday Bright Lights Bass B</div>
<div style="position:absolute;left:1688px;top:774px;font-size:14px;line-height:14px;color:#74c5e6;font-weight:400;white-space:nowrap;-webkit-text-stroke:0.3px #74c5e6;">172</div>
<div style="position:absolute;left:1742px;top:774px;font-size:13.2px;line-height:13.2px;color:#74c5e6;font-weight:400;white-space:nowrap;-webkit-text-stroke:0.3px #74c5e6;">8 Bars</div>
<div style="position:absolute;left:1816px;top:774px;font-size:14px;line-height:14px;color:#74c5e6;font-weight:400;white-space:nowrap;-webkit-text-stroke:0.3px #74c5e6;">a-Minor</div>
<svg style="position:absolute;left:1909px;top:775px;" width="14" height="13" viewBox="0 0 14 13"><path d="M7 11 L2.3 6.3 C1.1 5.1 1.1 3.1 2.3 2 C3.5 0.9 5.4 1.1 6.3 2.3 L7 3.1 L7.7 2.3 C8.6 1.1 10.5 0.9 11.7 2 C12.9 3.1 12.9 5.1 11.7 6.3 Z" fill="none" stroke="#74c5e6" stroke-width="1.3"/></svg>
<svg style="position:absolute;left:1495px;top:766px;" width="180" height="30" viewBox="0 0 180 30"><path d="M0.5,2.4V27.6M1.5,2.4V27.6M2.5,2.4V27.6M3.5,2.6V27.4M4.5,2.6V27.4M5.5,2.5V27.5M6.5,2.1V27.9M7.5,2.6V27.4M8.5,2.5V27.5M9.5,2.0V28.0M10.5,2.3V27.7M11.5,2.4V27.6M12.5,2.4V27.6M13.5,2.0V28.0M14.5,2.1V27.9M15.5,1.6V28.4M16.5,1.6V28.4M17.5,1.5V28.5M18.5,2.0V28.0M19.5,2.1V27.9M20.5,2.1V27.9M21.5,1.7V28.3M22.5,1.5V28.5M23.5,1.7V28.3M24.5,1.8V28.2M25.5,1.7V28.3M26.5,1.5V28.5M27.5,1.4V28.6M28.5,1.4V28.6M29.5,1.3V28.7M30.5,1.4V28.6M31.5,1.8V28.2M32.5,1.2V28.8M33.5,1.6V28.4M34.5,1.4V28.6M35.5,1.5V28.5M36.5,1.3V28.7M37.5,1.7V28.3M38.5,1.6V28.4M39.5,1.6V28.4M40.5,1.7V28.3M41.5,1.1V28.9M42.5,1.4V28.6M43.5,1.6V28.4M44.5,1.5V28.5M45.5,1.1V28.9M46.5,1.5V28.5M47.5,1.7V28.3M48.5,1.3V28.7M49.5,1.4V28.6M50.5,1.2V28.8M51.5,1.9V28.1M52.5,1.6V28.4M53.5,1.4V28.6M54.5,1.4V28.6M55.5,1.3V28.7M56.5,2.0V28.0M57.5,1.9V28.1M58.5,2.0V28.0M59.5,2.0V28.0M60.5,1.5V28.5M61.5,1.8V28.2M62.5,1.6V28.4M63.5,2.0V28.0M64.5,1.7V28.3M65.5,2.0V28.0M66.5,2.2V27.8M67.5,1.9V28.1M68.5,1.8V28.2M69.5,2.5V27.5M70.5,2.2V27.8M71.5,2.2V27.8M72.5,2.5V27.5M73.5,2.5V27.5M74.5,2.7V27.3M75.5,2.7V27.3M76.5,2.7V27.3M77.5,2.5V27.5M78.5,2.5V27.5M79.5,2.9V27.1M80.5,3.1V26.9M81.5,2.9V27.1M82.5,2.7V27.3M83.5,3.1V26.9M84.5,3.0V27.0M85.5,3.2V26.8M86.5,2.8V27.2M87.5,3.0V27.0M88.5,3.4V26.6M89.5,3.4V26.6M90.5,3.2V26.8M91.5,3.2V26.8M92.5,3.1V26.9M93.5,3.6V26.4M94.5,3.6V26.4M95.5,3.2V26.8M96.5,3.5V26.5M97.5,3.6V26.4M98.5,3.6V26.4M99.5,3.2V26.8M100.5,3.7V26.3M101.5,3.5V26.5M102.5,3.7V26.3M103.5,3.7V26.3M104.5,3.4V26.6M105.5,3.3V26.7M106.5,3.8V26.2M107.5,3.9V26.1M108.5,3.6V26.4M109.5,4.0V26.0M110.5,4.1V25.9M111.5,3.5V26.5M112.5,3.8V26.2M113.5,3.6V26.4M114.5,3.9V26.1M115.5,3.5V26.5M116.5,3.9V26.1M117.5,4.1V25.9M118.5,4.2V25.8M119.5,3.8V26.2M120.5,3.7V26.3M121.5,3.5V26.5M122.5,4.1V25.9M123.5,3.7V26.3M124.5,3.9V26.1M125.5,3.8V26.2M126.5,4.0V26.0M127.5,3.9V26.1M128.5,3.7V26.3M129.5,3.4V26.6M130.5,4.0V26.0M131.5,3.7V26.3M132.5,3.4V26.6M133.5,3.3V26.7M134.5,3.8V26.2M135.5,3.8V26.2M136.5,3.2V26.8M137.5,3.1V26.9M138.5,3.5V26.5M139.5,3.8V26.2M140.5,3.1V26.9M141.5,3.4V26.6M142.5,3.0V27.0M143.5,3.2V26.8M144.5,3.0V27.0M145.5,3.4V26.6M146.5,2.9V27.1M147.5,3.3V26.7M148.5,3.1V26.9M149.5,2.7V27.3M150.5,2.7V27.3M151.5,3.2V26.8M152.5,3.1V26.9M153.5,2.9V27.1M154.5,2.8V27.2M155.5,2.8V27.2M156.5,3.0V27.0M157.5,2.8V27.2M158.5,2.4V27.6M159.5,2.2V27.8M160.5,2.8V27.2M161.5,2.4V27.6M162.5,2.2V27.8M163.5,2.7V27.3M164.5,2.0V28.0M165.5,2.5V27.5M166.5,2.1V27.9M167.5,2.1V27.9M168.5,2.0V28.0M169.5,2.2V27.8M170.5,2.1V27.9M171.5,1.9V28.1M172.5,2.0V28.0M173.5,1.8V28.2M174.5,1.9V28.1M175.5,1.9V28.1M176.5,2.2V27.8M177.5,1.7V28.3M178.5,1.7V28.3M179.5,1.9V28.1" stroke="#6ab8d4" stroke-width="1" fill="none"/><path d="" stroke="#6ab8d4" stroke-width="1" fill="none" opacity="0.85"/></svg>
<div style="position:absolute;left:1236px;top:800px;width:699px;height:36px;background:#2c3034;"></div>
<div style="position:absolute;left:1280px;top:811px;font-size:13.5px;line-height:13.5px;color:#74c5e6;font-weight:400;white-space:nowrap;-webkit-text-stroke:0.3px #74c5e6;">Sunday Bright Lights Bass A</div>
<div style="position:absolute;left:1688px;top:811px;font-size:14px;line-height:14px;color:#74c5e6;font-weight:400;white-space:nowrap;-webkit-text-stroke:0.3px #74c5e6;">172</div>
<div style="position:absolute;left:1742px;top:811px;font-size:13.2px;line-height:13.2px;color:#74c5e6;font-weight:400;white-space:nowrap;-webkit-text-stroke:0.3px #74c5e6;">4 Bars</div>
<div style="position:absolute;left:1816px;top:811px;font-size:14px;line-height:14px;color:#74c5e6;font-weight:400;white-space:nowrap;-webkit-text-stroke:0.3px #74c5e6;">a-Minor</div>
<svg style="position:absolute;left:1909px;top:812px;" width="14" height="13" viewBox="0 0 14 13"><path d="M7 11 L2.3 6.3 C1.1 5.1 1.1 3.1 2.3 2 C3.5 0.9 5.4 1.1 6.3 2.3 L7 3.1 L7.7 2.3 C8.6 1.1 10.5 0.9 11.7 2 C12.9 3.1 12.9 5.1 11.7 6.3 Z" fill="none" stroke="#74c5e6" stroke-width="1.3"/></svg>
<svg style="position:absolute;left:1495px;top:803px;" width="180" height="30" viewBox="0 0 180 30"><path d="M0.5,3.0V27.0M1.5,3.0V27.0M2.5,3.4V26.6M3.5,3.7V26.3M4.5,3.3V26.7M5.5,3.8V26.2M6.5,11.2V18.8M7.5,3.4V26.6M8.5,3.8V26.2M9.5,3.4V26.6M10.5,3.3V26.7M11.5,9.8V20.2M12.5,3.1V26.9M13.5,3.8V26.2M14.5,3.0V27.0M15.5,3.0V27.0M16.5,3.3V26.7M17.5,3.8V26.2M18.5,3.3V26.7M19.5,3.4V26.6M20.5,2.8V27.2M21.5,11.2V18.8M22.5,2.9V27.1M23.5,2.7V27.3M24.5,3.0V27.0M25.5,2.9V27.1M26.5,3.7V26.3M27.5,2.7V27.3M28.5,3.3V26.7M29.5,2.8V27.2M30.5,2.8V27.2M31.5,3.7V26.3M32.5,3.0V27.0M33.5,2.8V27.2M34.5,3.8V26.2M35.5,3.5V26.5M36.5,3.0V27.0M37.5,3.7V26.3M38.5,11.2V18.8M39.5,3.6V26.4M40.5,2.9V27.1M41.5,3.7V26.3M42.5,3.3V26.7M43.5,2.8V27.2M44.5,3.7V26.3M45.5,3.6V26.4M46.5,3.3V26.7M47.5,3.5V26.5M48.5,3.9V26.1M49.5,3.7V26.3M50.5,3.7V26.3M51.5,2.8V27.2M52.5,3.1V26.9M53.5,2.8V27.2M54.5,11.2V18.8M55.5,3.0V27.0M56.5,3.8V26.2M57.5,3.3V26.7M58.5,3.1V26.9M59.5,3.5V26.5M60.5,2.9V27.1M61.5,3.2V26.8M62.5,3.2V26.8M63.5,2.8V27.2M64.5,3.8V26.2M65.5,2.7V27.3M66.5,3.1V26.9M67.5,3.4V26.6M68.5,2.9V27.1M69.5,3.6V26.4M70.5,11.2V18.8M71.5,3.2V26.8M72.5,3.5V26.5M73.5,3.0V27.0M74.5,3.4V26.6M75.5,3.7V26.3M76.5,3.0V27.0M77.5,3.8V26.2M78.5,2.9V27.1M79.5,3.6V26.4M80.5,3.1V26.9M81.5,2.7V27.3M82.5,3.2V26.8M83.5,3.1V26.9M84.5,3.5V26.5M85.5,3.9V26.1M86.5,3.9V26.1M87.5,11.2V18.8M88.5,3.2V26.8M89.5,3.4V26.6M90.5,3.3V26.7M91.5,2.8V27.2M92.5,3.7V26.3M93.5,3.6V26.4M94.5,3.1V26.9M95.5,3.9V26.1M96.5,3.9V26.1M97.5,3.5V26.5M98.5,3.8V26.2M99.5,3.5V26.5M100.5,3.6V26.4M101.5,3.2V26.8M102.5,3.2V26.8M103.5,11.2V18.8M104.5,3.2V26.8M105.5,3.3V26.7M106.5,3.7V26.3M107.5,2.8V27.2M108.5,3.6V26.4M109.5,3.7V26.3M110.5,3.8V26.2M111.5,3.1V26.9M112.5,2.9V27.1M113.5,3.0V27.0M114.5,3.4V26.6M115.5,3.6V26.4M116.5,3.9V26.1M117.5,3.1V26.9M118.5,3.2V26.8M119.5,11.2V18.8M120.5,3.1V26.9M121.5,3.4V26.6M122.5,2.8V27.2M123.5,3.0V27.0M124.5,9.8V20.2M125.5,2.8V27.2M126.5,3.8V26.2M127.5,3.3V26.7M128.5,3.4V26.6M129.5,3.6V26.4M130.5,3.8V26.2M131.5,3.0V27.0M132.5,3.9V26.1M133.5,3.2V26.8M134.5,2.8V27.2M135.5,11.2V18.8M136.5,3.7V26.3M137.5,3.2V26.8M138.5,3.3V26.7M139.5,3.1V26.9M140.5,2.9V27.1M141.5,3.7V26.3M142.5,3.5V26.5M143.5,3.5V26.5M144.5,3.8V26.2M145.5,2.8V27.2M146.5,3.0V27.0M147.5,3.0V27.0M148.5,3.9V26.1M149.5,2.9V27.1M150.5,11.2V18.8M151.5,3.3V26.7M152.5,3.0V27.0M153.5,3.4V26.6M154.5,3.6V26.4M155.5,3.8V26.2M156.5,3.6V26.4M157.5,3.9V26.1M158.5,3.5V26.5M159.5,3.0V27.0M160.5,3.1V26.9M161.5,2.9V27.1M162.5,3.0V27.0M163.5,3.6V26.4M164.5,3.2V26.8M165.5,3.4V26.6M166.5,3.0V27.0M167.5,11.2V18.8M168.5,3.6V26.4M169.5,3.1V26.9M170.5,2.7V27.3M171.5,3.6V26.4M172.5,9.8V20.2M173.5,3.9V26.1M174.5,3.6V26.4M175.5,3.6V26.4M176.5,3.0V27.0M177.5,2.8V27.2M178.5,3.0V27.0M179.5,3.5V26.5" stroke="#6ab8d4" stroke-width="1" fill="none"/><path d="" stroke="#6ab8d4" stroke-width="1" fill="none" opacity="0.85"/></svg>
<div style="position:absolute;left:1236px;top:838px;width:699px;height:36px;background:#2c3034;"></div>
<div style="position:absolute;left:1280px;top:849px;font-size:13.5px;line-height:13.5px;color:#74c5e6;font-weight:400;white-space:nowrap;-webkit-text-stroke:0.3px #74c5e6;">Sunday Bright Lights Bass B</div>
<div style="position:absolute;left:1688px;top:849px;font-size:14px;line-height:14px;color:#74c5e6;font-weight:400;white-space:nowrap;-webkit-text-stroke:0.3px #74c5e6;">172</div>
<div style="position:absolute;left:1742px;top:849px;font-size:13.2px;line-height:13.2px;color:#74c5e6;font-weight:400;white-space:nowrap;-webkit-text-stroke:0.3px #74c5e6;">4 Bars</div>
<div style="position:absolute;left:1816px;top:849px;font-size:14px;line-height:14px;color:#74c5e6;font-weight:400;white-space:nowrap;-webkit-text-stroke:0.3px #74c5e6;">a-Minor</div>
<svg style="position:absolute;left:1909px;top:850px;" width="14" height="13" viewBox="0 0 14 13"><path d="M7 11 L2.3 6.3 C1.1 5.1 1.1 3.1 2.3 2 C3.5 0.9 5.4 1.1 6.3 2.3 L7 3.1 L7.7 2.3 C8.6 1.1 10.5 0.9 11.7 2 C12.9 3.1 12.9 5.1 11.7 6.3 Z" fill="none" stroke="#74c5e6" stroke-width="1.3"/></svg>
<svg style="position:absolute;left:1495px;top:841px;" width="180" height="30" viewBox="0 0 180 30"><path d="M0.5,4.0V26.0M1.5,3.6V26.4M2.5,2.4V27.6M3.5,2.8V27.2M4.5,2.7V27.3M5.5,3.5V26.5M6.5,3.0V27.0M7.5,2.2V27.8M8.5,3.3V26.7M9.5,2.0V28.0M10.5,3.1V26.9M11.5,1.6V28.4M12.5,2.0V28.0M13.5,2.4V27.6M14.5,2.4V27.6M15.5,3.3V26.7M16.5,2.4V27.6M17.5,3.1V26.9M18.5,3.7V26.3M19.5,3.4V26.6M20.5,3.4V26.6M21.5,2.6V27.4M22.5,2.9V27.1M23.5,4.3V25.7M24.5,3.8V26.2M25.5,4.1V25.9M26.5,3.9V26.1M27.5,3.5V26.5M28.5,3.7V26.3M29.5,5.0V25.0M30.5,3.9V26.1M31.5,5.1V24.9M32.5,4.4V25.6M33.5,4.8V25.2M34.5,4.6V25.4M35.5,4.7V25.3M36.5,4.6V25.4M37.5,3.9V26.1M38.5,4.7V25.3M39.5,4.7V25.3M40.5,3.6V26.4M41.5,3.6V26.4M42.5,3.8V26.2M43.5,3.0V27.0M44.5,1.4V28.6M45.5,3.8V26.2M46.5,2.6V27.4M47.5,3.3V26.7M48.5,3.4V26.6M49.5,2.8V27.2M50.5,2.4V27.6M51.5,2.9V27.1M52.5,3.1V26.9M53.5,2.3V27.7M54.5,3.1V26.9M55.5,2.1V27.9M56.5,3.1V26.9M57.5,2.0V28.0M58.5,3.1V26.9M59.5,2.4V27.6M60.5,3.3V26.7M61.5,3.2V26.8M62.5,2.9V27.1M63.5,3.3V26.7M64.5,2.5V27.5M65.5,3.9V26.1M66.5,4.1V25.9M67.5,2.9V27.1M68.5,3.4V26.6M69.5,4.3V25.7M70.5,4.5V25.5M71.5,2.7V27.3M72.5,4.3V25.7M73.5,3.9V26.1M74.5,4.1V25.9M75.5,4.9V25.1M76.5,4.5V25.5M77.5,3.7V26.3M78.5,4.2V25.8M79.5,4.4V25.6M80.5,3.9V26.1M81.5,3.8V26.2M82.5,3.6V26.4M83.5,3.8V26.2M84.5,4.2V25.8M85.5,4.4V25.6M86.5,3.3V26.7M87.5,3.4V26.6M88.5,3.6V26.4M89.5,3.1V26.9M90.5,2.9V27.1M91.5,3.5V26.5M92.5,2.5V27.5M93.5,2.9V27.1M94.5,3.5V26.5M95.5,3.2V26.8M96.5,2.0V28.0M97.5,3.2V26.8M98.5,2.5V27.5M99.5,2.5V27.5M100.5,2.1V27.9M101.5,2.7V27.3M102.5,3.1V26.9M103.5,2.9V27.1M104.5,3.3V26.7M105.5,3.1V26.9M106.5,3.3V26.7M107.5,3.8V26.2M108.5,3.3V26.7M109.5,3.5V26.5M110.5,3.9V26.1M111.5,2.9V27.1M112.5,4.1V25.9M113.5,4.0V26.0M114.5,4.5V25.5M115.5,3.6V26.4M116.5,4.2V25.8M117.5,4.6V25.4M118.5,4.5V25.5M119.5,3.8V26.2M120.5,4.4V25.6M121.5,4.3V25.7M122.5,3.8V26.2M123.5,3.8V26.2M124.5,4.5V25.5M125.5,4.3V25.7M126.5,4.9V25.1M127.5,4.4V25.6M128.5,4.2V25.8M129.5,3.9V26.1M130.5,3.5V26.5M131.5,2.9V27.1M132.5,4.1V25.9M133.5,2.7V27.3M134.5,3.7V26.3M135.5,1.4V28.6M136.5,3.7V26.3M137.5,2.6V27.4M138.5,3.4V26.6M139.5,3.1V26.9M140.5,2.9V27.1M141.5,2.0V28.0M142.5,3.1V26.9M143.5,2.4V27.6M144.5,2.3V27.7M145.5,2.2V27.8M146.5,3.1V26.9M147.5,2.7V27.3M148.5,2.9V27.1M149.5,2.8V27.2M150.5,3.4V26.6M151.5,3.1V26.9M152.5,3.3V26.7M153.5,3.3V26.7M154.5,3.4V26.6M155.5,4.3V25.7M156.5,3.8V26.2M157.5,3.6V26.4M158.5,4.1V25.9M159.5,3.4V26.6M160.5,3.9V26.1M161.5,4.9V25.1M162.5,4.0V26.0M163.5,4.6V25.4M164.5,4.3V25.7M165.5,2.3V27.7M166.5,4.0V26.0M167.5,4.6V25.4M168.5,4.5V25.5M169.5,4.2V25.8M170.5,4.6V25.4M171.5,4.1V25.9M172.5,3.4V26.6M173.5,3.3V26.7M174.5,3.7V26.3M175.5,3.6V26.4M176.5,3.2V26.8M177.5,3.6V26.4M178.5,3.5V26.5M179.5,2.9V27.1" stroke="#6ab8d4" stroke-width="1" fill="none"/><path d="" stroke="#6ab8d4" stroke-width="1" fill="none" opacity="0.85"/></svg>
<div style="position:absolute;left:1236px;top:876px;width:699px;height:35px;background:#2c3034;"></div>
<div style="position:absolute;left:1280px;top:887px;font-size:13.5px;line-height:13.5px;color:#74c5e6;font-weight:400;white-space:nowrap;-webkit-text-stroke:0.3px #74c5e6;">Xavier my Dear Bass A</div>
<div style="position:absolute;left:1688px;top:887px;font-size:14px;line-height:14px;color:#74c5e6;font-weight:400;white-space:nowrap;-webkit-text-stroke:0.3px #74c5e6;">172</div>
<div style="position:absolute;left:1742px;top:887px;font-size:13.2px;line-height:13.2px;color:#74c5e6;font-weight:400;white-space:nowrap;-webkit-text-stroke:0.3px #74c5e6;">8 Bars</div>
<div style="position:absolute;left:1816px;top:887px;font-size:14px;line-height:14px;color:#74c5e6;font-weight:400;white-space:nowrap;-webkit-text-stroke:0.3px #74c5e6;">a-Minor</div>
<svg style="position:absolute;left:1909px;top:888px;" width="14" height="13" viewBox="0 0 14 13"><path d="M7 11 L2.3 6.3 C1.1 5.1 1.1 3.1 2.3 2 C3.5 0.9 5.4 1.1 6.3 2.3 L7 3.1 L7.7 2.3 C8.6 1.1 10.5 0.9 11.7 2 C12.9 3.1 12.9 5.1 11.7 6.3 Z" fill="none" stroke="#74c5e6" stroke-width="1.3"/></svg>
<svg style="position:absolute;left:1495px;top:879px;" width="180" height="30" viewBox="0 0 180 30"><path d="M0.5,3.2V26.8M1.5,8.2V21.8M2.5,2.0V28.0M3.5,2.5V27.5M4.5,8.2V21.8M5.5,2.8V27.2M6.5,3.3V26.7M7.5,3.0V27.0M8.5,1.9V28.1M9.5,2.4V27.6M10.5,2.3V27.7M11.5,8.2V21.8M12.5,8.2V21.8M13.5,2.4V27.6M14.5,2.4V27.6M15.5,2.4V27.6M16.5,2.3V27.7M17.5,2.4V27.6M18.5,2.3V27.7M19.5,3.0V27.0M20.5,2.3V27.7M21.5,2.6V27.4M22.5,2.2V27.8M23.5,3.1V26.9M24.5,3.0V27.0M25.5,8.2V21.8M26.5,2.1V27.9M27.5,1.9V28.1M28.5,8.2V21.8M29.5,8.2V21.8M30.5,2.1V27.9M31.5,2.1V27.9M32.5,2.5V27.5M33.5,2.9V27.1M34.5,2.8V27.2M35.5,8.2V21.8M36.5,2.8V27.2M37.5,2.7V27.3M38.5,8.2V21.8M39.5,1.9V28.1M40.5,3.2V26.8M41.5,2.4V27.6M42.5,3.2V26.8M43.5,3.1V26.9M44.5,2.1V27.9M45.5,2.4V27.6M46.5,1.9V28.1M47.5,2.6V27.4M48.5,3.3V26.7M49.5,2.7V27.3M50.5,2.4V27.6M51.5,8.2V21.8M52.5,1.8V28.2M53.5,2.6V27.4M54.5,2.7V27.3M55.5,3.1V26.9M56.5,2.3V27.7M57.5,8.2V21.8M58.5,3.1V26.9M59.5,3.3V26.7M60.5,3.3V26.7M61.5,2.3V27.7M62.5,8.2V21.8M63.5,1.9V28.1M64.5,3.2V26.8M65.5,2.0V28.0M66.5,3.1V26.9M67.5,3.3V26.7M68.5,2.2V27.8M69.5,2.9V27.1M70.5,8.2V21.8M71.5,3.0V27.0M72.5,3.2V26.8M73.5,2.1V27.9M74.5,2.2V27.8M75.5,2.0V28.0M76.5,2.2V27.8M77.5,3.2V26.8M78.5,2.4V27.6M79.5,8.2V21.8M80.5,2.6V27.4M81.5,1.9V28.1M82.5,8.2V21.8M83.5,1.9V28.1M84.5,2.2V27.8M85.5,3.3V26.7M86.5,3.3V26.7M87.5,2.3V27.7M88.5,2.1V27.9M89.5,3.2V26.8M90.5,8.2V21.8M91.5,2.2V27.8M92.5,3.1V26.9M93.5,2.0V28.0M94.5,2.6V27.4M95.5,3.2V26.8M96.5,2.7V27.3M97.5,2.4V27.6M98.5,2.6V27.4M99.5,2.3V27.7M100.5,3.1V26.9M101.5,8.2V21.8M102.5,2.8V27.2M103.5,2.3V27.7M104.5,2.4V27.6M105.5,2.7V27.3M106.5,2.7V27.3M107.5,2.1V27.9M108.5,1.9V28.1M109.5,2.1V27.9M110.5,2.4V27.6M111.5,2.9V27.1M112.5,3.2V26.8M113.5,1.8V28.2M114.5,2.2V27.8M115.5,2.1V27.9M116.5,8.2V21.8M117.5,2.4V27.6M118.5,8.2V21.8M119.5,2.1V27.9M120.5,2.4V27.6M121.5,2.8V27.2M122.5,2.7V27.3M123.5,2.0V28.0M124.5,2.7V27.3M125.5,2.3V27.7M126.5,2.4V27.6M127.5,2.0V28.0M128.5,2.1V27.9M129.5,2.9V27.1M130.5,8.2V21.8M131.5,2.9V27.1M132.5,2.7V27.3M133.5,8.2V21.8M134.5,2.1V27.9M135.5,2.0V28.0M136.5,3.2V26.8M137.5,8.2V21.8M138.5,2.1V27.9M139.5,2.0V28.0M140.5,2.4V27.6M141.5,8.2V21.8M142.5,2.0V28.0M143.5,2.1V27.9M144.5,2.3V27.7M145.5,1.9V28.1M146.5,2.8V27.2M147.5,3.2V26.8M148.5,2.5V27.5M149.5,2.1V27.9M150.5,3.0V27.0M151.5,2.2V27.8M152.5,1.9V28.1M153.5,2.9V27.1M154.5,8.2V21.8M155.5,8.2V21.8M156.5,2.6V27.4M157.5,3.0V27.0M158.5,2.9V27.1M159.5,2.2V27.8M160.5,2.1V27.9M161.5,2.6V27.4M162.5,3.2V26.8M163.5,2.1V27.9M164.5,2.1V27.9M165.5,8.2V21.8M166.5,2.4V27.6M167.5,2.0V28.0M168.5,2.0V28.0M169.5,8.2V21.8M170.5,2.6V27.4M171.5,2.4V27.6M172.5,3.0V27.0M173.5,3.0V27.0M174.5,3.0V27.0M175.5,8.2V21.8M176.5,2.8V27.2M177.5,2.5V27.5M178.5,2.7V27.3M179.5,2.5V27.5" stroke="#6ab8d4" stroke-width="1" fill="none"/><path d="" stroke="#6ab8d4" stroke-width="1" fill="none" opacity="0.85"/></svg>
<div style="position:absolute;left:1236px;top:913px;width:699px;height:36px;background:#363a42;"></div>
<div style="position:absolute;left:1280px;top:924px;font-size:13.5px;line-height:13.5px;color:#74c5e6;font-weight:400;white-space:nowrap;-webkit-text-stroke:0.3px #74c5e6;">Xavier my Dear Bass B</div>
<div style="position:absolute;left:1688px;top:924px;font-size:14px;line-height:14px;color:#74c5e6;font-weight:400;white-space:nowrap;-webkit-text-stroke:0.3px #74c5e6;">172</div>
<div style="position:absolute;left:1742px;top:924px;font-size:13.2px;line-height:13.2px;color:#74c5e6;font-weight:400;white-space:nowrap;-webkit-text-stroke:0.3px #74c5e6;">8 Bars</div>
<div style="position:absolute;left:1816px;top:924px;font-size:14px;line-height:14px;color:#74c5e6;font-weight:400;white-space:nowrap;-webkit-text-stroke:0.3px #74c5e6;">a-Minor</div>
<svg style="position:absolute;left:1909px;top:925px;" width="14" height="13" viewBox="0 0 14 13"><path d="M7 11 L2.3 6.3 C1.1 5.1 1.1 3.1 2.3 2 C3.5 0.9 5.4 1.1 6.3 2.3 L7 3.1 L7.7 2.3 C8.6 1.1 10.5 0.9 11.7 2 C12.9 3.1 12.9 5.1 11.7 6.3 Z" fill="none" stroke="#74c5e6" stroke-width="1.3"/></svg>
<svg style="position:absolute;left:1495px;top:916px;" width="180" height="30" viewBox="0 0 180 30"><path d="M0.5,3.7V26.3M1.5,2.9V27.1M2.5,3.5V26.5M3.5,3.7V26.3M4.5,3.5V26.5M5.5,3.2V26.8M6.5,3.9V26.1M7.5,3.3V26.7M8.5,3.4V26.6M9.5,3.3V26.7M10.5,3.8V26.2M11.5,3.0V27.0M12.5,2.9V27.1M13.5,2.9V27.1M14.5,3.5V26.5M15.5,3.0V27.0M16.5,3.4V26.6M17.5,3.0V27.0M18.5,3.8V26.2M19.5,2.9V27.1M20.5,2.8V27.2M21.5,3.3V26.7M22.5,3.3V26.7M23.5,3.3V26.7M24.5,3.3V26.7M25.5,3.9V26.1M26.5,2.7V27.3M27.5,3.6V26.4M28.5,3.7V26.3M29.5,3.8V26.2M30.5,3.6V26.4M31.5,2.9V27.1M32.5,3.9V26.1M33.5,3.8V26.2M34.5,3.1V26.9M35.5,3.7V26.3M36.5,3.9V26.1M37.5,3.2V26.8M38.5,3.2V26.8M39.5,3.3V26.7M40.5,3.1V26.9M41.5,3.8V26.2M42.5,2.9V27.1M43.5,3.0V27.0M44.5,3.8V26.2M45.5,3.8V26.2M46.5,3.3V26.7M47.5,3.3V26.7M48.5,3.6V26.4M49.5,3.8V26.2M50.5,3.4V26.6M51.5,3.7V26.3M52.5,3.2V26.8M53.5,2.9V27.1M54.5,3.7V26.3M55.5,3.2V26.8M56.5,3.0V27.0M57.5,3.7V26.3M58.5,2.9V27.1M59.5,2.8V27.2M60.5,3.4V26.6M61.5,3.4V26.6M62.5,2.9V27.1M63.5,3.3V26.7M64.5,3.4V26.6M65.5,2.8V27.2M66.5,3.0V27.0M67.5,3.5V26.5M68.5,3.6V26.4M69.5,3.5V26.5M70.5,3.4V26.6M71.5,2.7V27.3M72.5,2.9V27.1M73.5,2.8V27.2M74.5,2.9V27.1M75.5,2.9V27.1M76.5,3.8V26.2M77.5,3.3V26.7M78.5,2.8V27.2M79.5,2.8V27.2M80.5,3.6V26.4M81.5,3.4V26.6M82.5,3.1V26.9M83.5,3.5V26.5M84.5,3.3V26.7M85.5,3.8V26.2M86.5,3.4V26.6M87.5,3.3V26.7M88.5,3.9V26.1M89.5,3.7V26.3M90.5,2.7V27.3M91.5,3.0V27.0M92.5,2.8V27.2M93.5,3.1V26.9M94.5,2.9V27.1M95.5,2.8V27.2M96.5,2.8V27.2M97.5,3.9V26.1M98.5,3.1V26.9M99.5,3.6V26.4M100.5,3.1V26.9M101.5,3.6V26.4M102.5,3.2V26.8M103.5,2.8V27.2M104.5,3.2V26.8M105.5,3.6V26.4M106.5,3.3V26.7M107.5,3.4V26.6M108.5,2.8V27.2M109.5,3.6V26.4M110.5,3.5V26.5M111.5,3.1V26.9M112.5,3.8V26.2M113.5,3.2V26.8M114.5,2.8V27.2M115.5,3.3V26.7M116.5,3.6V26.4M117.5,3.3V26.7M118.5,3.3V26.7M119.5,3.7V26.3M120.5,3.8V26.2M121.5,3.7V26.3M122.5,3.5V26.5M123.5,3.4V26.6M124.5,3.6V26.4M125.5,3.6V26.4M126.5,3.8V26.2M127.5,3.2V26.8M128.5,2.9V27.1M129.5,3.2V26.8M130.5,3.2V26.8M131.5,3.1V26.9M132.5,3.7V26.3M133.5,3.0V27.0M134.5,3.3V26.7M135.5,3.2V26.8M136.5,3.2V26.8M137.5,3.3V26.7M138.5,3.5V26.5M139.5,3.6V26.4M140.5,3.6V26.4M141.5,3.3V26.7M142.5,3.4V26.6M143.5,3.2V26.8M144.5,3.9V26.1M145.5,3.5V26.5M146.5,2.9V27.1M147.5,3.6V26.4M148.5,3.2V26.8M149.5,3.3V26.7M150.5,3.6V26.4M151.5,2.7V27.3M152.5,3.5V26.5M153.5,3.0V27.0M154.5,3.7V26.3M155.5,3.8V26.2M156.5,2.9V27.1M157.5,3.4V26.6M158.5,3.8V26.2M159.5,3.4V26.6M160.5,3.4V26.6M161.5,3.0V27.0M162.5,3.8V26.2M163.5,3.6V26.4M164.5,2.7V27.3M165.5,3.0V27.0M166.5,3.7V26.3M167.5,3.5V26.5M168.5,3.5V26.5M169.5,3.1V26.9M170.5,3.2V26.8M171.5,2.9V27.1M172.5,2.9V27.1M173.5,3.3V26.7M174.5,3.0V27.0M175.5,3.0V27.0M176.5,3.0V27.0M177.5,3.3V26.7M178.5,3.0V27.0M179.5,3.0V27.0" stroke="#6ab8d4" stroke-width="1" fill="none"/><path d="" stroke="#6ab8d4" stroke-width="1" fill="none" opacity="0.85"/></svg>
<div style="position:absolute;left:1236px;top:951px;width:699px;height:36px;background:#2c3034;"></div>
<div style="position:absolute;left:1280px;top:962px;font-size:13.5px;line-height:13.5px;color:#72de9e;font-weight:400;white-space:nowrap;-webkit-text-stroke:0.3px #72de9e;">Don&#39;t Hate Drums A</div>
<div style="position:absolute;left:1688px;top:962px;font-size:14px;line-height:14px;color:#72de9e;font-weight:400;white-space:nowrap;-webkit-text-stroke:0.3px #72de9e;">172</div>
<div style="position:absolute;left:1742px;top:962px;font-size:13.2px;line-height:13.2px;color:#72de9e;font-weight:400;white-space:nowrap;-webkit-text-stroke:0.3px #72de9e;">8 Bars</div>
<svg style="position:absolute;left:1909px;top:963px;" width="14" height="13" viewBox="0 0 14 13"><path d="M7 11 L2.3 6.3 C1.1 5.1 1.1 3.1 2.3 2 C3.5 0.9 5.4 1.1 6.3 2.3 L7 3.1 L7.7 2.3 C8.6 1.1 10.5 0.9 11.7 2 C12.9 3.1 12.9 5.1 11.7 6.3 Z" fill="none" stroke="#72de9e" stroke-width="1.3"/></svg>
<svg style="position:absolute;left:1495px;top:954px;" width="180" height="30" viewBox="0 0 180 30"><path d="M0.5,9.4V20.6M1.5,10.8V19.2M2.5,10.3V19.7M3.5,10.1V19.9M4.5,11.0V19.0M5.5,10.8V19.2M6.5,11.6V18.4M7.5,11.8V18.2M8.5,12.2V17.8M9.5,12.2V17.8M10.5,12.7V17.3M11.5,12.3V17.7M12.5,10.2V19.8M13.5,10.8V19.2M14.5,10.5V19.5M15.5,11.1V18.9M16.5,10.7V19.3M17.5,11.7V18.3M18.5,11.2V18.8M19.5,11.8V18.2M20.5,11.7V18.3M21.5,12.4V17.6M22.5,12.7V17.3M23.5,9.8V20.2M24.5,10.5V19.5M25.5,10.7V19.3M26.5,10.6V19.4M27.5,11.6V18.4M28.5,11.4V18.6M29.5,11.5V18.5M30.5,11.3V18.7M31.5,12.2V17.8M32.5,11.8V18.2M33.5,12.6V17.4M34.5,10.4V19.6M35.5,9.8V20.2M36.5,11.0V19.0M37.5,10.5V19.5M38.5,10.4V19.6M39.5,11.4V18.6M40.5,11.5V18.5M41.5,12.2V17.8M42.5,11.9V18.1M43.5,11.7V18.3M44.5,13.1V16.9M45.5,9.6V20.4M46.5,10.8V19.2M47.5,10.3V19.7M48.5,11.0V19.0M49.5,10.9V19.1M50.5,11.2V18.8M51.5,11.4V18.6M52.5,12.2V17.8M53.5,12.5V17.5M54.5,12.2V17.8M55.5,12.4V17.6M56.5,13.3V16.7M57.5,10.3V19.7M58.5,10.5V19.5M59.5,11.1V18.9M60.5,10.8V19.2M61.5,11.2V18.8M62.5,11.9V18.1M63.5,11.6V18.4M64.5,12.0V18.0M65.5,12.5V17.5M66.5,12.0V18.0M67.5,12.3V17.7M68.5,9.5V20.5M69.5,9.8V20.2M70.5,10.3V19.7M71.5,10.4V19.6M72.5,10.7V19.3M73.5,11.5V18.5M74.5,11.8V18.2M75.5,12.3V17.7M76.5,12.2V17.8M77.5,12.9V17.1M78.5,12.8V17.2M79.5,10.2V19.8M80.5,10.0V20.0M81.5,10.9V19.1M82.5,11.2V18.8M83.5,11.5V18.5M84.5,10.9V19.1M85.5,11.9V18.1M86.5,11.5V18.5M87.5,11.5V18.5M88.5,12.3V17.7M89.5,13.0V17.0M90.5,10.2V19.8M91.5,10.1V19.9M92.5,10.7V19.3M93.5,11.0V19.0M94.5,11.4V18.6M95.5,11.1V18.9M96.5,11.6V18.4M97.5,11.6V18.4M98.5,12.5V17.5M99.5,12.5V17.5M100.5,13.0V17.0M101.5,12.9V17.1M102.5,10.3V19.7M103.5,10.7V19.3M104.5,10.9V19.1M105.5,10.4V19.6M106.5,10.7V19.3M107.5,11.8V18.2M108.5,11.4V18.6M109.5,12.1V17.9M110.5,12.0V18.0M111.5,12.7V17.3M112.5,12.9V17.1M113.5,10.4V19.6M114.5,10.0V20.0M115.5,11.1V18.9M116.5,11.2V18.8M117.5,11.6V18.4M118.5,11.7V18.3M119.5,11.5V18.5M120.5,12.1V17.9M121.5,11.9V18.1M122.5,13.0V17.0M123.5,12.3V17.7M124.5,9.5V20.5M125.5,10.8V19.2M126.5,10.1V19.9M127.5,10.4V19.6M128.5,11.1V18.9M129.5,10.9V19.1M130.5,11.0V19.0M131.5,11.3V18.7M132.5,11.8V18.2M133.5,12.2V17.8M134.5,13.1V16.9M135.5,10.0V20.0M136.5,9.6V20.4M137.5,11.0V19.0M138.5,10.3V19.7M139.5,10.4V19.6M140.5,11.1V18.9M141.5,11.6V18.4M142.5,12.1V17.9M143.5,11.7V18.3M144.5,12.6V17.4M145.5,12.6V17.4M146.5,12.9V17.1M147.5,10.5V19.5M148.5,10.6V19.4M149.5,10.6V19.4M150.5,11.3V18.7M151.5,11.0V19.0M152.5,11.1V18.9M153.5,12.1V17.9M154.5,12.3V17.7M155.5,12.5V17.5M156.5,12.5V17.5M157.5,12.7V17.3M158.5,10.4V19.6M159.5,9.7V20.3M160.5,11.0V19.0M161.5,10.2V19.8M162.5,11.5V18.5M163.5,11.4V18.6M164.5,12.2V17.8M165.5,11.7V18.3M166.5,11.6V18.4M167.5,12.7V17.3M168.5,13.2V16.8M169.5,9.6V20.4M170.5,10.1V19.9M171.5,10.0V20.0M172.5,10.3V19.7M173.5,11.2V18.8M174.5,11.5V18.5M175.5,11.5V18.5M176.5,11.4V18.6M177.5,12.0V18.0M178.5,11.9V18.1M179.5,12.1V17.9" stroke="#62d690" stroke-width="1" fill="none"/><path d="M0.5,0.4V29.6M12.5,2.1V27.9M14.5,0.2V29.8M18.5,2.9V27.1M34.5,0.1V29.9M39.5,2.1V27.9M41.5,1.1V28.9M45.5,0.9V29.1M46.5,0.5V29.5M49.5,1.1V28.9M52.5,0.7V29.3M53.5,2.5V27.5M56.5,0.7V29.3M58.5,2.2V27.8M65.5,0.2V29.8M66.5,0.3V29.7M67.5,1.2V28.8M69.5,1.8V28.2M70.5,2.1V27.9M72.5,2.5V27.5M73.5,0.1V29.9M77.5,0.5V29.5M78.5,2.4V27.6M79.5,2.9V27.1M82.5,0.5V29.5M87.5,0.1V29.9M88.5,1.6V28.4M95.5,0.7V29.3M97.5,1.8V28.2M98.5,0.4V29.6M102.5,2.1V27.9M103.5,0.8V29.2M107.5,2.9V27.1M113.5,0.3V29.7M115.5,2.5V27.5M116.5,1.9V28.1M117.5,1.1V28.9M123.5,2.9V27.1M125.5,2.7V27.3M126.5,0.3V29.7M127.5,0.9V29.1M129.5,2.7V27.3M136.5,0.7V29.3M138.5,1.4V28.6M140.5,2.8V27.2M142.5,2.6V27.4M144.5,1.5V28.5M146.5,0.3V29.7M153.5,1.9V28.1M154.5,2.2V27.8M156.5,2.0V28.0M158.5,3.0V27.0M163.5,1.4V28.6M167.5,2.6V27.4M169.5,2.4V27.6M171.5,0.6V29.4M173.5,0.5V29.5M176.5,2.9V27.1" stroke="#62d690" stroke-width="1" fill="none" opacity="0.85"/></svg>
<div style="position:absolute;left:1236px;top:989px;width:699px;height:35px;background:#2c3034;"></div>
<div style="position:absolute;left:1280px;top:1000px;font-size:13.5px;line-height:13.5px;color:#72de9e;font-weight:400;white-space:nowrap;-webkit-text-stroke:0.3px #72de9e;">Don&#39;t Hate Drums B</div>
<div style="position:absolute;left:1688px;top:1000px;font-size:14px;line-height:14px;color:#72de9e;font-weight:400;white-space:nowrap;-webkit-text-stroke:0.3px #72de9e;">172</div>
<div style="position:absolute;left:1742px;top:1000px;font-size:13.2px;line-height:13.2px;color:#72de9e;font-weight:400;white-space:nowrap;-webkit-text-stroke:0.3px #72de9e;">8 Bars</div>
<svg style="position:absolute;left:1909px;top:1001px;" width="14" height="13" viewBox="0 0 14 13"><path d="M7 11 L2.3 6.3 C1.1 5.1 1.1 3.1 2.3 2 C3.5 0.9 5.4 1.1 6.3 2.3 L7 3.1 L7.7 2.3 C8.6 1.1 10.5 0.9 11.7 2 C12.9 3.1 12.9 5.1 11.7 6.3 Z" fill="none" stroke="#72de9e" stroke-width="1.3"/></svg>
<svg style="position:absolute;left:1495px;top:992px;" width="180" height="30" viewBox="0 0 180 30"><path d="M0.5,6.9V23.1M1.5,7.7V22.3M2.5,8.3V21.7M3.5,8.6V21.4M4.5,8.1V21.9M5.5,9.1V20.9M6.5,10.1V19.9M7.5,9.5V20.5M8.5,10.5V19.5M9.5,10.8V19.2M10.5,11.4V18.6M11.5,11.5V18.5M12.5,6.7V23.3M13.5,7.7V22.3M14.5,8.3V21.7M15.5,8.7V21.3M16.5,8.4V21.6M17.5,9.0V21.0M18.5,9.3V20.7M19.5,9.9V20.1M20.5,10.6V19.4M21.5,10.6V19.4M22.5,11.4V18.6M23.5,6.7V23.3M24.5,7.3V22.7M25.5,8.5V21.5M26.5,8.6V21.4M27.5,9.0V21.0M28.5,9.2V20.8M29.5,10.2V19.8M30.5,10.1V19.9M31.5,10.9V19.1M32.5,11.3V18.7M33.5,11.4V18.6M34.5,7.5V22.5M35.5,7.3V22.7M36.5,8.4V21.6M37.5,7.9V22.1M38.5,8.5V21.5M39.5,9.6V20.4M40.5,9.3V20.7M41.5,10.2V19.8M42.5,10.4V19.6M43.5,11.3V18.7M44.5,11.9V18.1M45.5,7.5V22.5M46.5,7.7V22.3M47.5,7.9V22.1M48.5,8.1V21.9M49.5,8.6V21.4M50.5,8.6V21.4M51.5,9.7V20.3M52.5,9.7V20.3M53.5,10.8V19.2M54.5,10.5V19.5M55.5,11.0V19.0M56.5,12.1V17.9M57.5,6.9V23.1M58.5,7.4V22.6M59.5,8.2V21.8M60.5,8.4V21.6M61.5,9.4V20.6M62.5,9.8V20.2M63.5,10.1V19.9M64.5,10.4V19.6M65.5,10.6V19.4M66.5,10.8V19.2M67.5,12.1V17.9M68.5,7.5V22.5M69.5,7.1V22.9M70.5,8.5V21.5M71.5,8.2V21.8M72.5,8.9V21.1M73.5,9.4V20.6M74.5,9.6V20.4M75.5,10.5V19.5M76.5,10.5V19.5M77.5,11.2V18.8M78.5,11.4V18.6M79.5,7.2V22.8M80.5,7.6V22.4M81.5,7.3V22.7M82.5,8.1V21.9M83.5,8.7V21.3M84.5,9.1V20.9M85.5,9.0V21.0M86.5,9.7V20.3M87.5,10.1V19.9M88.5,10.7V19.3M89.5,11.6V18.4M90.5,6.5V23.5M91.5,7.1V22.9M92.5,7.5V22.5M93.5,8.0V22.0M94.5,8.6V21.4M95.5,9.6V20.4M96.5,9.7V20.3M97.5,10.0V20.0M98.5,10.7V19.3M99.5,11.2V18.8M100.5,11.3V18.7M101.5,11.6V18.4M102.5,7.7V22.3M103.5,7.4V22.6M104.5,7.6V22.4M105.5,8.0V22.0M106.5,9.5V20.5M107.5,8.8V21.2M108.5,9.5V20.5M109.5,9.8V20.2M110.5,10.2V19.8M111.5,11.7V18.3M112.5,11.3V18.7M113.5,7.5V22.5M114.5,7.1V22.9M115.5,8.3V21.7M116.5,7.9V22.1M117.5,9.4V20.6M118.5,8.8V21.2M119.5,10.2V19.8M120.5,9.7V20.3M121.5,10.1V19.9M122.5,10.7V19.3M123.5,11.6V18.4M124.5,7.2V22.8M125.5,8.0V22.0M126.5,8.1V21.9M127.5,8.2V21.8M128.5,9.3V20.7M129.5,9.1V20.9M130.5,10.1V19.9M131.5,9.8V20.2M132.5,11.0V19.0M133.5,10.6V19.4M134.5,11.4V18.6M135.5,6.8V23.2M136.5,7.1V22.9M137.5,8.0V22.0M138.5,8.5V21.5M139.5,8.3V21.7M140.5,9.3V20.7M141.5,8.9V21.1M142.5,10.2V19.8M143.5,9.8V20.2M144.5,10.8V19.2M145.5,10.9V19.1M146.5,11.1V18.9M147.5,7.7V22.3M148.5,8.2V21.8M149.5,8.0V22.0M150.5,8.7V21.3M151.5,8.7V21.3M152.5,9.8V20.2M153.5,10.1V19.9M154.5,10.3V19.7M155.5,10.9V19.1M156.5,11.2V18.8M157.5,11.1V18.9M158.5,7.6V22.4M159.5,7.7V22.3M160.5,8.5V21.5M161.5,8.5V21.5M162.5,8.3V21.7M163.5,9.6V20.4M164.5,9.8V20.2M165.5,9.8V20.2M166.5,10.8V19.2M167.5,11.4V18.6M168.5,11.9V18.1M169.5,6.6V23.4M170.5,7.1V22.9M171.5,7.9V22.1M172.5,8.7V21.3M173.5,8.6V21.4M174.5,9.1V20.9M175.5,10.0V20.0M176.5,10.2V19.8M177.5,10.0V20.0M178.5,10.3V19.7M179.5,11.8V18.2" stroke="#62d690" stroke-width="1" fill="none"/><path d="M1.5,1.3V28.7M4.5,2.9V27.1M5.5,0.8V29.2M8.5,1.0V29.0M12.5,2.1V27.9M14.5,2.7V27.3M19.5,1.0V29.0M20.5,1.3V28.7M22.5,2.0V28.0M23.5,2.4V27.6M29.5,0.3V29.7M30.5,0.4V29.6M31.5,1.4V28.6M33.5,1.3V28.7M35.5,1.8V28.2M40.5,0.5V29.5M41.5,0.1V29.9M44.5,1.9V28.1M46.5,0.9V29.1M50.5,0.8V29.2M55.5,1.2V28.8M57.5,0.2V29.8M58.5,2.4V27.6M60.5,2.9V27.1M64.5,0.4V29.6M70.5,0.5V29.5M72.5,0.5V29.5M74.5,2.0V28.0M76.5,2.5V27.5M79.5,1.3V28.7M80.5,1.6V28.4M81.5,2.6V27.4M82.5,2.2V27.8M83.5,1.3V28.7M85.5,1.3V28.7M91.5,0.7V29.3M98.5,2.0V28.0M99.5,0.4V29.6M101.5,2.5V27.5M102.5,2.1V27.9M106.5,1.3V28.7M109.5,1.5V28.5M110.5,2.2V27.8M111.5,2.2V27.8M112.5,1.8V28.2M119.5,1.4V28.6M121.5,2.0V28.0M124.5,1.8V28.2M127.5,1.6V28.4M132.5,2.6V27.4M133.5,0.6V29.4M143.5,3.0V27.0M146.5,0.7V29.3M147.5,2.6V27.4M149.5,0.2V29.8M150.5,2.5V27.5M152.5,0.7V29.3M157.5,0.8V29.2M163.5,2.2V27.8M164.5,2.4V27.6M169.5,0.7V29.3M170.5,2.0V28.0M177.5,0.4V29.6M178.5,2.9V27.1" stroke="#62d690" stroke-width="1" fill="none" opacity="0.85"/></svg>
<div style="position:absolute;left:1236px;top:1026px;width:699px;height:36px;background:#2c3034;"></div>
<div style="position:absolute;left:1280px;top:1037px;font-size:13.5px;line-height:13.5px;color:#72de9e;font-weight:400;white-space:nowrap;-webkit-text-stroke:0.3px #72de9e;">Don&#39;t Hate Drums C</div>
<div style="position:absolute;left:1688px;top:1037px;font-size:14px;line-height:14px;color:#72de9e;font-weight:400;white-space:nowrap;-webkit-text-stroke:0.3px #72de9e;">172</div>
<div style="position:absolute;left:1742px;top:1037px;font-size:13.2px;line-height:13.2px;color:#72de9e;font-weight:400;white-space:nowrap;-webkit-text-stroke:0.3px #72de9e;">8 Bars</div>
<svg style="position:absolute;left:1909px;top:1038px;" width="14" height="13" viewBox="0 0 14 13"><path d="M7 11 L2.3 6.3 C1.1 5.1 1.1 3.1 2.3 2 C3.5 0.9 5.4 1.1 6.3 2.3 L7 3.1 L7.7 2.3 C8.6 1.1 10.5 0.9 11.7 2 C12.9 3.1 12.9 5.1 11.7 6.3 Z" fill="none" stroke="#72de9e" stroke-width="1.3"/></svg>
<svg style="position:absolute;left:1495px;top:1029px;" width="180" height="30" viewBox="0 0 180 30"><path d="M0.5,10.5V19.5M1.5,10.6V19.4M2.5,10.9V19.1M3.5,11.2V18.8M4.5,10.4V19.6M5.5,10.7V19.3M6.5,12.0V18.0M7.5,11.5V18.5M8.5,12.3V17.7M9.5,12.7V17.3M10.5,12.7V17.3M11.5,13.2V16.8M12.5,10.5V19.5M13.5,10.7V19.3M14.5,11.0V19.0M15.5,10.9V19.1M16.5,11.1V18.9M17.5,11.6V18.4M18.5,11.2V18.8M19.5,12.2V17.8M20.5,12.7V17.3M21.5,12.5V17.5M22.5,12.9V17.1M23.5,9.8V20.2M24.5,10.2V19.8M25.5,10.0V20.0M26.5,10.5V19.5M27.5,11.3V18.7M28.5,10.8V19.2M29.5,11.7V18.3M30.5,12.3V17.7M31.5,12.7V17.3M32.5,11.9V18.1M33.5,12.8V17.2M34.5,10.4V19.6M35.5,9.9V20.1M36.5,11.0V19.0M37.5,11.0V19.0M38.5,10.9V19.1M39.5,11.9V18.1M40.5,11.1V18.9M41.5,11.7V18.3M42.5,12.4V17.6M43.5,12.0V18.0M44.5,12.3V17.7M45.5,9.9V20.1M46.5,9.9V20.1M47.5,10.3V19.7M48.5,11.0V19.0M49.5,11.2V18.8M50.5,11.2V18.8M51.5,11.4V18.6M52.5,12.1V17.9M53.5,11.9V18.1M54.5,12.2V17.8M55.5,12.8V17.2M56.5,12.8V17.2M57.5,9.7V20.3M58.5,9.9V20.1M59.5,10.2V19.8M60.5,11.3V18.7M61.5,11.6V18.4M62.5,11.0V19.0M63.5,11.7V18.3M64.5,11.3V18.7M65.5,12.2V17.8M66.5,12.1V17.9M67.5,13.1V16.9M68.5,10.2V19.8M69.5,10.6V19.4M70.5,10.7V19.3M71.5,11.4V18.6M72.5,11.6V18.4M73.5,11.6V18.4M74.5,11.9V18.1M75.5,12.3V17.7M76.5,11.7V18.3M77.5,12.0V18.0M78.5,12.8V17.2M79.5,10.1V19.9M80.5,10.5V19.5M81.5,10.3V19.7M82.5,10.9V19.1M83.5,10.9V19.1M84.5,11.6V18.4M85.5,11.3V18.7M86.5,11.6V18.4M87.5,12.6V17.4M88.5,12.4V17.6M89.5,12.6V17.4M90.5,9.6V20.4M91.5,10.2V19.8M92.5,10.0V20.0M93.5,10.7V19.3M94.5,11.0V19.0M95.5,11.2V18.8M96.5,11.3V18.7M97.5,11.8V18.2M98.5,11.9V18.1M99.5,11.9V18.1M100.5,13.0V17.0M101.5,13.2V16.8M102.5,10.0V20.0M103.5,10.1V19.9M104.5,11.1V18.9M105.5,11.0V19.0M106.5,10.5V19.5M107.5,10.9V19.1M108.5,11.6V18.4M109.5,12.2V17.8M110.5,12.5V17.5M111.5,12.4V17.6M112.5,12.8V17.2M113.5,9.6V20.4M114.5,9.9V20.1M115.5,11.1V18.9M116.5,11.0V19.0M117.5,11.1V18.9M118.5,11.5V18.5M119.5,11.9V18.1M120.5,11.8V18.2M121.5,12.1V17.9M122.5,12.3V17.7M123.5,12.9V17.1M124.5,10.2V19.8M125.5,9.9V20.1M126.5,10.5V19.5M127.5,10.8V19.2M128.5,11.5V18.5M129.5,11.1V18.9M130.5,12.0V18.0M131.5,12.2V17.8M132.5,12.0V18.0M133.5,12.3V17.7M134.5,12.4V17.6M135.5,9.5V20.5M136.5,10.5V19.5M137.5,10.1V19.9M138.5,10.8V19.2M139.5,11.2V18.8M140.5,11.0V19.0M141.5,11.2V18.8M142.5,12.0V18.0M143.5,12.2V17.8M144.5,12.7V17.3M145.5,12.7V17.3M146.5,13.2V16.8M147.5,9.5V20.5M148.5,10.9V19.1M149.5,10.4V19.6M150.5,11.4V18.6M151.5,10.9V19.1M152.5,11.2V18.8M153.5,12.1V17.9M154.5,11.3V18.7M155.5,12.1V17.9M156.5,12.1V17.9M157.5,12.2V17.8M158.5,9.6V20.4M159.5,10.2V19.8M160.5,10.8V19.2M161.5,10.4V19.6M162.5,11.6V18.4M163.5,10.8V19.2M164.5,11.1V18.9M165.5,12.4V17.6M166.5,12.2V17.8M167.5,12.8V17.2M168.5,12.9V17.1M169.5,10.5V19.5M170.5,9.9V20.1M171.5,10.5V19.5M172.5,11.2V18.8M173.5,11.4V18.6M174.5,11.4V18.6M175.5,11.3V18.7M176.5,11.3V18.7M177.5,11.6V18.4M178.5,12.3V17.7M179.5,12.1V17.9" stroke="#62d690" stroke-width="1" fill="none"/><path d="M2.5,1.0V29.0M6.5,0.6V29.4M7.5,1.5V28.5M9.5,0.0V30.0M15.5,1.9V28.1M17.5,0.1V29.9M19.5,2.2V27.8M20.5,1.5V28.5M22.5,0.9V29.1M32.5,1.2V28.8M33.5,2.4V27.6M38.5,0.1V29.9M52.5,0.2V29.8M55.5,0.5V29.5M58.5,1.9V28.1M60.5,2.2V27.8M63.5,1.8V28.2M71.5,1.3V28.7M72.5,0.8V29.2M76.5,1.7V28.3M78.5,1.7V28.3M90.5,1.2V28.8M97.5,1.0V29.0M99.5,2.3V27.7M101.5,0.7V29.3M102.5,1.0V29.0M107.5,2.0V28.0M108.5,0.0V30.0M109.5,2.1V27.9M112.5,2.1V27.9M114.5,2.4V27.6M120.5,2.1V27.9M129.5,0.4V29.6M134.5,2.4V27.6M135.5,0.2V29.8M136.5,2.7V27.3M140.5,2.8V27.2M141.5,0.5V29.5M142.5,1.3V28.7M149.5,1.4V28.6M152.5,0.5V29.5M155.5,2.0V28.0M157.5,1.5V28.5M159.5,2.6V27.4M161.5,0.2V29.8M166.5,0.8V29.2M168.5,1.3V28.7M171.5,1.5V28.5M175.5,2.5V27.5M178.5,2.7V27.3M179.5,1.5V28.5" stroke="#62d690" stroke-width="1" fill="none" opacity="0.85"/></svg>
<div style="position:absolute;left:1236px;top:1064px;width:699px;height:36px;background:#2c3034;"></div>
<div style="position:absolute;left:1280px;top:1075px;font-size:13.5px;line-height:13.5px;color:#72de9e;font-weight:400;white-space:nowrap;-webkit-text-stroke:0.3px #72de9e;">Don&#39;t Hate Drums D</div>
<div style="position:absolute;left:1688px;top:1075px;font-size:14px;line-height:14px;color:#72de9e;font-weight:400;white-space:nowrap;-webkit-text-stroke:0.3px #72de9e;">172</div>
<div style="position:absolute;left:1742px;top:1075px;font-size:13.2px;line-height:13.2px;color:#72de9e;font-weight:400;white-space:nowrap;-webkit-text-stroke:0.3px #72de9e;">8 Bars</div>
<svg style="position:absolute;left:1909px;top:1076px;" width="14" height="13" viewBox="0 0 14 13"><path d="M7 11 L2.3 6.3 C1.1 5.1 1.1 3.1 2.3 2 C3.5 0.9 5.4 1.1 6.3 2.3 L7 3.1 L7.7 2.3 C8.6 1.1 10.5 0.9 11.7 2 C12.9 3.1 12.9 5.1 11.7 6.3 Z" fill="none" stroke="#72de9e" stroke-width="1.3"/></svg>
<svg style="position:absolute;left:1495px;top:1067px;" width="180" height="30" viewBox="0 0 180 30"><path d="M0.5,6.9V23.1M1.5,7.7V22.3M2.5,7.8V22.2M3.5,8.6V21.4M4.5,9.0V21.0M5.5,8.6V21.4M6.5,9.0V21.0M7.5,9.9V20.1M8.5,10.3V19.7M9.5,11.1V18.9M10.5,11.6V18.4M11.5,11.8V18.2M12.5,7.5V22.5M13.5,8.2V21.8M14.5,8.4V21.6M15.5,8.2V21.8M16.5,9.5V20.5M17.5,8.8V21.2M18.5,9.6V20.4M19.5,10.4V19.6M20.5,10.7V19.3M21.5,11.7V18.3M22.5,11.7V18.3M23.5,7.6V22.4M24.5,7.3V22.7M25.5,8.4V21.6M26.5,8.6V21.4M27.5,8.3V21.7M28.5,9.3V20.7M29.5,9.4V20.6M30.5,9.8V20.2M31.5,10.9V19.1M32.5,10.6V19.4M33.5,11.9V18.1M34.5,7.2V22.8M35.5,7.2V22.8M36.5,8.3V21.7M37.5,7.8V22.2M38.5,8.4V21.6M39.5,8.8V21.2M40.5,9.7V20.3M41.5,9.7V20.3M42.5,10.7V19.3M43.5,10.9V19.1M44.5,11.8V18.2M45.5,6.6V23.4M46.5,7.7V22.3M47.5,8.1V21.9M48.5,7.7V22.3M49.5,8.4V21.6M50.5,8.7V21.3M51.5,9.3V20.7M52.5,9.5V20.5M53.5,10.9V19.1M54.5,10.4V19.6M55.5,11.1V18.9M56.5,11.3V18.7M57.5,7.8V22.2M58.5,7.8V22.2M59.5,8.1V21.9M60.5,8.9V21.1M61.5,8.5V21.5M62.5,9.6V20.4M63.5,9.6V20.4M64.5,10.1V19.9M65.5,11.1V18.9M66.5,11.7V18.3M67.5,11.9V18.1M68.5,7.3V22.7M69.5,7.4V22.6M70.5,8.1V21.9M71.5,7.9V22.1M72.5,8.3V21.7M73.5,9.7V20.3M74.5,10.3V19.7M75.5,10.2V19.8M76.5,10.9V19.1M77.5,11.5V18.5M78.5,11.0V19.0M79.5,7.2V22.8M80.5,7.0V23.0M81.5,8.4V21.6M82.5,8.4V21.6M83.5,8.9V21.1M84.5,9.0V21.0M85.5,9.6V20.4M86.5,9.6V20.4M87.5,10.6V19.4M88.5,11.4V18.6M89.5,11.1V18.9M90.5,7.0V23.0M91.5,6.9V23.1M92.5,7.5V22.5M93.5,8.6V21.4M94.5,8.2V21.8M95.5,9.0V21.0M96.5,9.2V20.8M97.5,10.2V19.8M98.5,10.6V19.4M99.5,10.9V19.1M100.5,11.1V18.9M101.5,11.5V18.5M102.5,6.7V23.3M103.5,7.4V22.6M104.5,8.0V22.0M105.5,8.2V21.8M106.5,9.4V20.6M107.5,8.9V21.1M108.5,10.2V19.8M109.5,10.5V19.5M110.5,10.1V19.9M111.5,11.5V18.5M112.5,11.9V18.1M113.5,7.2V22.8M114.5,7.7V22.3M115.5,7.4V22.6M116.5,7.9V22.1M117.5,8.4V21.6M118.5,8.9V21.1M119.5,9.4V20.6M120.5,10.1V19.9M121.5,10.3V19.7M122.5,10.5V19.5M123.5,11.7V18.3M124.5,7.3V22.7M125.5,8.0V22.0M126.5,7.8V22.2M127.5,7.8V22.2M128.5,9.3V20.7M129.5,8.9V21.1M130.5,9.7V20.3M131.5,10.5V19.5M132.5,9.9V20.1M133.5,10.7V19.3M134.5,11.5V18.5M135.5,6.6V23.4M136.5,7.5V22.5M137.5,7.9V22.1M138.5,8.2V21.8M139.5,8.4V21.6M140.5,9.5V20.5M141.5,10.0V20.0M142.5,9.9V20.1M143.5,10.2V19.8M144.5,10.9V19.1M145.5,11.5V18.5M146.5,11.3V18.7M147.5,7.6V22.4M148.5,7.4V22.6M149.5,7.6V22.4M150.5,8.2V21.8M151.5,8.8V21.2M152.5,9.8V20.2M153.5,9.6V20.4M154.5,10.5V19.5M155.5,10.3V19.7M156.5,11.5V18.5M157.5,11.0V19.0M158.5,7.3V22.7M159.5,8.1V21.9M160.5,8.2V21.8M161.5,8.9V21.1M162.5,8.9V21.1M163.5,8.9V21.1M164.5,10.2V19.8M165.5,10.3V19.7M166.5,10.5V19.5M167.5,11.4V18.6M168.5,11.1V18.9M169.5,7.6V22.4M170.5,8.0V22.0M171.5,8.0V22.0M172.5,8.0V22.0M173.5,8.9V21.1M174.5,9.1V20.9M175.5,9.0V21.0M176.5,9.5V20.5M177.5,9.9V20.1M178.5,11.3V18.7M179.5,11.1V18.9" stroke="#62d690" stroke-width="1" fill="none"/><path d="M0.5,1.6V28.4M4.5,2.3V27.7M6.5,0.2V29.8M10.5,2.9V27.1M16.5,1.2V28.8M17.5,1.1V28.9M23.5,0.8V29.2M24.5,2.0V28.0M25.5,2.3V27.7M34.5,0.1V29.9M45.5,0.5V29.5M46.5,1.6V28.4M56.5,1.5V28.5M57.5,0.6V29.4M62.5,2.2V27.8M67.5,0.1V29.9M68.5,0.3V29.7M72.5,0.5V29.5M74.5,0.2V29.8M92.5,2.0V28.0M94.5,1.2V28.8M95.5,1.8V28.2M103.5,2.5V27.5M107.5,0.8V29.2M108.5,2.8V27.2M111.5,0.2V29.8M113.5,2.2V27.8M115.5,2.4V27.6M118.5,2.5V27.5M121.5,1.9V28.1M127.5,2.3V27.7M131.5,1.1V28.9M137.5,0.4V29.6M154.5,1.2V28.8M155.5,2.4V27.6M156.5,1.0V29.0M160.5,1.1V28.9M161.5,2.8V27.2M163.5,0.5V29.5M164.5,1.1V28.9M166.5,0.6V29.4M171.5,1.1V28.9M174.5,0.4V29.6M177.5,1.6V28.4" stroke="#62d690" stroke-width="1" fill="none" opacity="0.85"/></svg>
<div style="position:absolute;left:1236px;top:1102px;width:699px;height:9px;background:#2c3034;"></div>
<svg style="position:absolute;left:1495px;top:1105px;" width="180" height="6" viewBox="0 0 180 6"><path d="M0.5,10.0V20.0M1.5,10.5V19.5M2.5,10.7V19.3M3.5,10.7V19.3M4.5,11.3V18.7M5.5,11.6V18.4M6.5,11.2V18.8M7.5,11.4V18.6M8.5,11.5V18.5M9.5,12.0V18.0M10.5,13.1V16.9M11.5,12.5V17.5M12.5,10.4V19.6M13.5,10.8V19.2M14.5,10.0V20.0M15.5,11.3V18.7M16.5,10.7V19.3M17.5,11.4V18.6M18.5,12.1V17.9M19.5,11.9V18.1M20.5,11.7V18.3M21.5,12.5V17.5M22.5,13.1V16.9M23.5,10.0V20.0M24.5,10.9V19.1M25.5,10.3V19.7M26.5,10.2V19.8M27.5,10.8V19.2M28.5,11.0V19.0M29.5,12.0V18.0M30.5,11.7V18.3M31.5,12.7V17.3M32.5,12.0V18.0M33.5,13.2V16.8M34.5,9.9V20.1M35.5,10.1V19.9M36.5,10.5V19.5M37.5,11.1V18.9M38.5,11.1V18.9M39.5,11.7V18.3M40.5,11.4V18.6M41.5,11.5V18.5M42.5,12.6V17.4M43.5,12.8V17.2M44.5,12.7V17.3M45.5,9.6V20.4M46.5,9.9V20.1M47.5,10.8V19.2M48.5,10.6V19.4M49.5,10.4V19.6M50.5,10.9V19.1M51.5,11.3V18.7M52.5,12.3V17.7M53.5,11.6V18.4M54.5,12.6V17.4M55.5,12.8V17.2M56.5,12.2V17.8M57.5,9.6V20.4M58.5,10.9V19.1M59.5,11.1V18.9M60.5,10.6V19.4M61.5,11.5V18.5M62.5,11.9V18.1M63.5,11.2V18.8M64.5,12.5V17.5M65.5,12.1V17.9M66.5,12.4V17.6M67.5,12.6V17.4M68.5,10.5V19.5M69.5,10.5V19.5M70.5,11.1V18.9M71.5,11.4V18.6M72.5,10.7V19.3M73.5,11.8V18.2M74.5,11.9V18.1M75.5,12.3V17.7M76.5,12.1V17.9M77.5,12.9V17.1M78.5,12.2V17.8M79.5,10.4V19.6M80.5,10.5V19.5M81.5,10.9V19.1M82.5,10.2V19.8M83.5,11.6V18.4M84.5,11.0V19.0M85.5,11.5V18.5M86.5,11.9V18.1M87.5,11.9V18.1M88.5,12.0V18.0M89.5,12.1V17.9M90.5,9.6V20.4M91.5,9.7V20.3M92.5,10.0V20.0M93.5,10.7V19.3M94.5,11.2V18.8M95.5,11.4V18.6M96.5,10.9V19.1M97.5,11.2V18.8M98.5,11.6V18.4M99.5,11.9V18.1M100.5,12.6V17.4M101.5,12.3V17.7M102.5,10.3V19.7M103.5,10.0V20.0M104.5,10.3V19.7M105.5,11.3V18.7M106.5,11.4V18.6M107.5,11.6V18.4M108.5,11.1V18.9M109.5,11.7V18.3M110.5,11.6V18.4M111.5,11.9V18.1M112.5,12.1V17.9M113.5,10.3V19.7M114.5,10.9V19.1M115.5,10.0V20.0M116.5,10.6V19.4M117.5,10.8V19.2M118.5,11.6V18.4M119.5,11.4V18.6M120.5,11.3V18.7M121.5,12.0V18.0M122.5,12.3V17.7M123.5,12.9V17.1M124.5,10.5V19.5M125.5,10.7V19.3M126.5,9.9V20.1M127.5,11.0V19.0M128.5,11.4V18.6M129.5,11.4V18.6M130.5,11.6V18.4M131.5,12.3V17.7M132.5,12.2V17.8M133.5,12.9V17.1M134.5,12.9V17.1M135.5,9.5V20.5M136.5,10.4V19.6M137.5,9.9V20.1M138.5,10.6V19.4M139.5,11.3V18.7M140.5,10.6V19.4M141.5,11.3V18.7M142.5,12.1V17.9M143.5,11.6V18.4M144.5,12.4V17.6M145.5,12.9V17.1M146.5,13.1V16.9M147.5,10.1V19.9M148.5,10.0V20.0M149.5,10.3V19.7M150.5,11.2V18.8M151.5,11.3V18.7M152.5,11.4V18.6M153.5,12.2V17.8M154.5,11.5V18.5M155.5,12.2V17.8M156.5,12.2V17.8M157.5,12.7V17.3M158.5,10.1V19.9M159.5,10.5V19.5M160.5,10.0V20.0M161.5,11.3V18.7M162.5,11.0V19.0M163.5,10.8V19.2M164.5,12.1V17.9M165.5,11.8V18.2M166.5,11.7V18.3M167.5,12.7V17.3M168.5,12.7V17.3M169.5,10.5V19.5M170.5,10.4V19.6M171.5,10.7V19.3M172.5,10.8V19.2M173.5,10.8V19.2M174.5,11.8V18.2M175.5,11.2V18.8M176.5,12.1V17.9M177.5,11.9V18.1M178.5,12.7V17.3M179.5,12.0V18.0" stroke="#62d690" stroke-width="1" fill="none"/><path d="M2.5,0.8V29.2M5.5,1.3V28.7M9.5,2.4V27.6M14.5,2.9V27.1M17.5,2.7V27.3M22.5,1.3V28.7M23.5,2.2V27.8M29.5,2.4V27.6M34.5,2.0V28.0M37.5,0.3V29.7M38.5,1.2V28.8M39.5,1.6V28.4M45.5,1.1V28.9M48.5,2.3V27.7M49.5,1.8V28.2M52.5,0.1V29.9M53.5,2.9V27.1M57.5,2.5V27.5M60.5,0.6V29.4M68.5,1.4V28.6M83.5,2.7V27.3M90.5,1.0V29.0M92.5,0.2V29.8M94.5,2.0V28.0M95.5,1.7V28.3M99.5,2.3V27.7M100.5,2.3V27.7M108.5,1.4V28.6M112.5,2.4V27.6M114.5,0.9V29.1M115.5,1.7V28.3M118.5,2.9V27.1M119.5,2.2V27.8M123.5,2.8V27.2M125.5,1.5V28.5M128.5,2.1V27.9M136.5,2.4V27.6M137.5,1.0V29.0M139.5,2.7V27.3M142.5,3.0V27.0M143.5,0.1V29.9M147.5,2.3V27.7M148.5,1.9V28.1M149.5,2.4V27.6M154.5,2.9V27.1M155.5,1.6V28.4M156.5,2.6V27.4M157.5,2.3V27.7M158.5,2.8V27.2M161.5,0.8V29.2M165.5,2.5V27.5M166.5,2.8V27.2M170.5,1.0V29.0M171.5,0.0V30.0M172.5,3.0V27.0" stroke="#62d690" stroke-width="1" fill="none" opacity="0.85"/></svg>
<svg style="position:absolute;left:1246px;top:658px;" width="20" height="20" viewBox="0 0 20 20"><path d="M1.5 19 L3 16.2 L4 13.6 L13.6 3 C14.5 2 16 1.6 17 2.4 C17.9 3.2 17.8 4.6 17.2 5.6 L14.3 10.5 L12.3 15.2 C11 17.5 8 18.6 5 18.8 Z" fill="#74c5e6"/><g fill="#74c5e6"><circle cx="2.9" cy="10" r="1.3"/><circle cx="5.9" cy="7.1" r="1.3"/><circle cx="8.8" cy="4.3" r="1.3"/><circle cx="11.7" cy="1.5" r="1.3"/></g><g fill="#2e4f5c" opacity="0.7"><circle cx="6.6" cy="13.1" r="0.7"/><circle cx="9.2" cy="10.3" r="0.7"/><circle cx="11.9" cy="7.4" r="0.7"/><circle cx="14.6" cy="4.6" r="0.7"/></g></svg>
<svg style="position:absolute;left:1244px;top:959px;" width="22" height="20" viewBox="0 0 22 20"><rect x="5.5" y="1" width="4.3" height="1.9" fill="#72de9e"/><rect x="11" y="1" width="4" height="1.9" fill="#72de9e"/><rect x="0.5" y="4.5" width="5" height="6.5" fill="#72de9e"/><rect x="15.5" y="4.5" width="5" height="4" fill="#72de9e"/><circle cx="10.5" cy="11.3" r="6" fill="none" stroke="#72de9e" stroke-width="1.6"/><path d="M5.5 18.5 L7 16 M15.5 18.5 L14 16" stroke="#72de9e" stroke-width="1.5"/></svg>
<svg style="position:absolute;left:1190px;top:663px;" width="32" height="32" viewBox="0 0 32 32"><circle cx="16.2" cy="16" r="15.7" fill="#363a40"/></svg>
<div style="position:absolute;left:1190px;top:670px;width:32px;text-align:center;font-size:18.5px;line-height:19px;font-weight:700;color:#ececec">1</div>
<svg style="position:absolute;left:1190px;top:730px;" width="32" height="32" viewBox="0 0 32 32"><circle cx="16.2" cy="16" r="15.7" fill="#363a40"/></svg>
<div style="position:absolute;left:1190px;top:737px;width:32px;text-align:center;font-size:18.5px;line-height:19px;font-weight:700;color:#ececec">2</div>
<svg style="position:absolute;left:1190px;top:797px;" width="32" height="32" viewBox="0 0 32 32"><circle cx="16.2" cy="16" r="15.7" fill="#363a40"/></svg>
<div style="position:absolute;left:1190px;top:804px;width:32px;text-align:center;font-size:18.5px;line-height:19px;font-weight:700;color:#ececec">3</div>
<svg style="position:absolute;left:1190px;top:864px;" width="32" height="32" viewBox="0 0 32 32"><circle cx="16.2" cy="16" r="15.7" fill="#363a40"/></svg>
<div style="position:absolute;left:1190px;top:871px;width:32px;text-align:center;font-size:18.5px;line-height:19px;font-weight:700;color:#ececec">4</div>
<svg style="position:absolute;left:1190px;top:931px;" width="32" height="32" viewBox="0 0 32 32"><circle cx="16.2" cy="16" r="15.7" fill="#363a40"/></svg>
<div style="position:absolute;left:1190px;top:938px;width:32px;text-align:center;font-size:18.5px;line-height:19px;font-weight:700;color:#ececec">5</div>
<svg style="position:absolute;left:1190px;top:998px;" width="32" height="32" viewBox="0 0 32 32"><circle cx="16.2" cy="16" r="15.7" fill="#5bb3d4"/></svg>
<div style="position:absolute;left:1190px;top:1005px;width:32px;text-align:center;font-size:18.5px;line-height:19px;font-weight:700;color:#23282c">6</div>
<svg style="position:absolute;left:1190px;top:1065px;" width="32" height="32" viewBox="0 0 32 32"><circle cx="16.2" cy="16" r="15.7" fill="#363a40"/></svg>
<div style="position:absolute;left:1190px;top:1072px;width:32px;text-align:center;font-size:18.5px;line-height:19px;font-weight:700;color:#ececec">7</div>
<div style="position:absolute;left:1937px;top:652px;width:7px;height:55px;background:#3e4449;border-radius:3.5px;"></div>
<div style="position:absolute;left:0px;top:1111px;width:1946px;height:21px;background:#373b43;"></div>
</body></html>
